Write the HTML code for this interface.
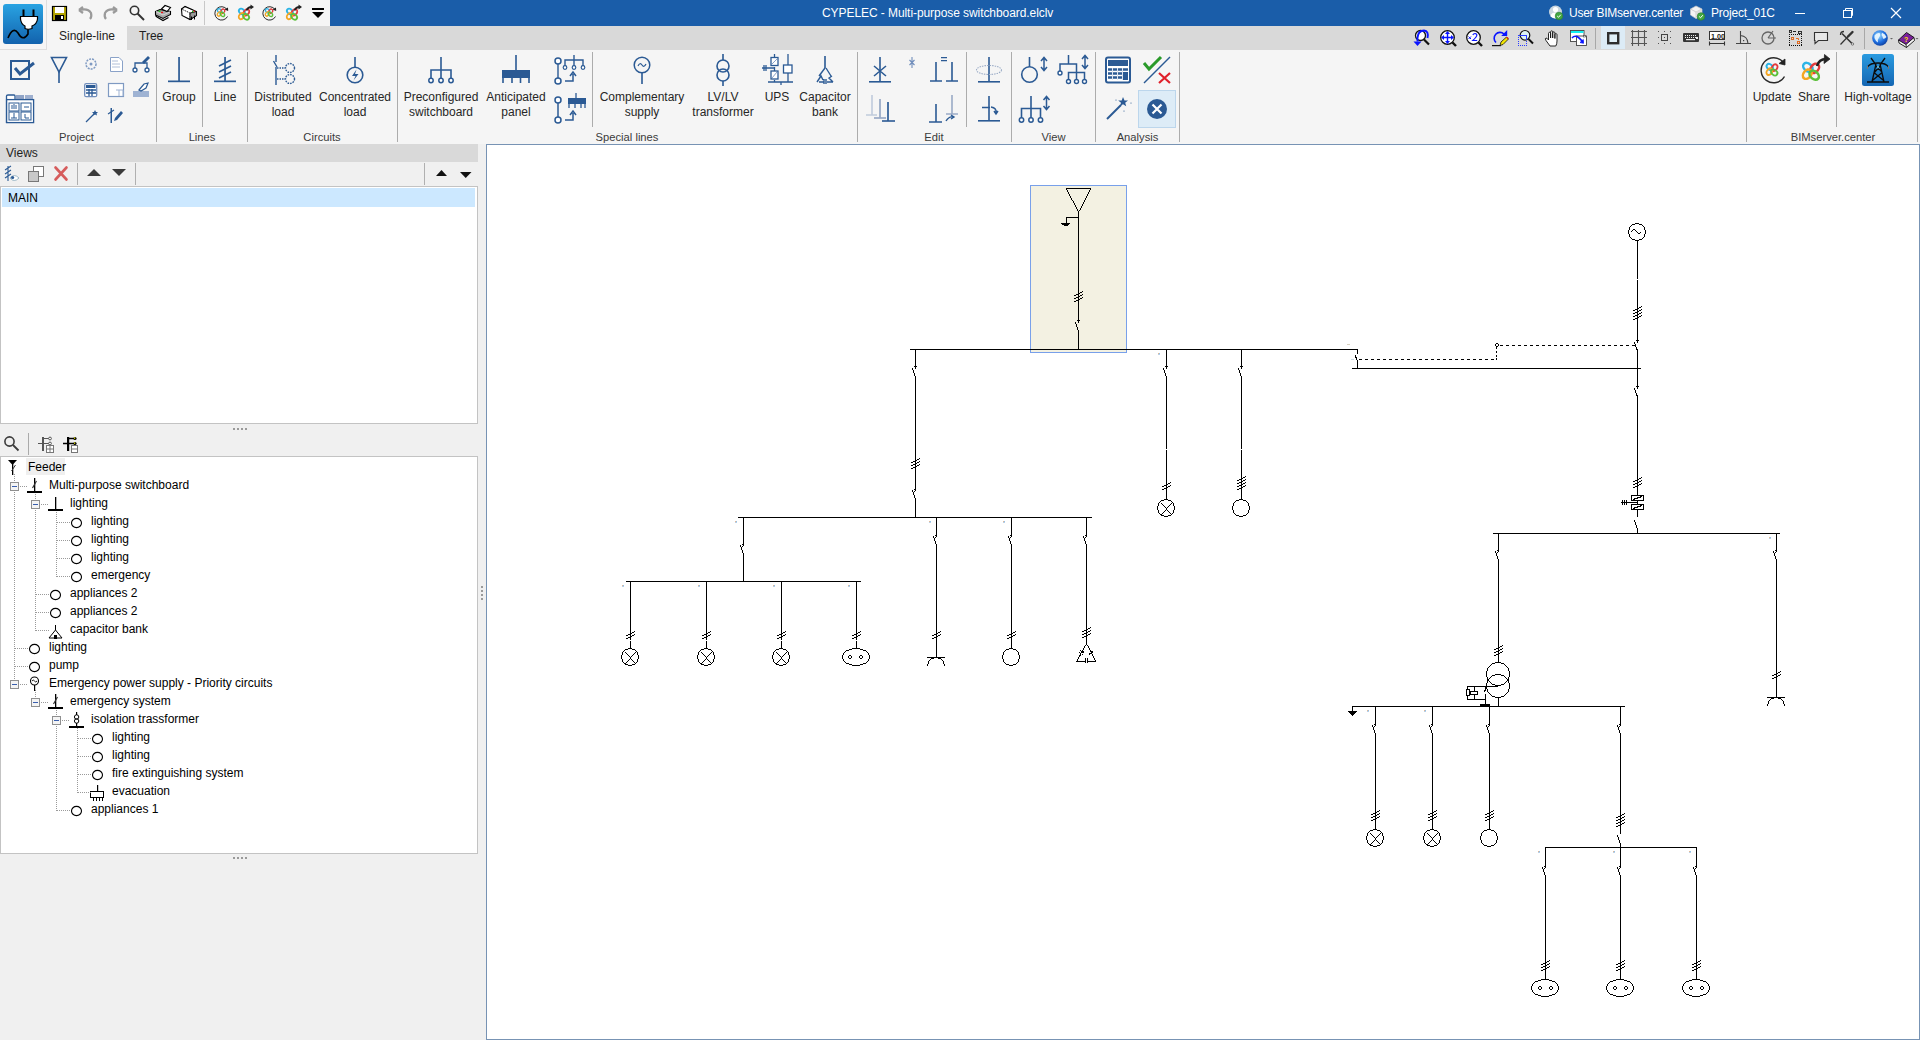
<!DOCTYPE html>
<html><head><meta charset="utf-8">
<style>
*{box-sizing:border-box;margin:0;padding:0}
html,body{width:1920px;height:1040px;overflow:hidden;background:#f0f0f0;font-family:"Liberation Sans",sans-serif;font-size:12px;color:#1e1e1e}
.a{position:absolute}
.t{position:absolute;white-space:nowrap;line-height:14px}
.c{text-align:center}
svg{position:absolute;overflow:visible}
</style></head><body>

<!-- title bar -->
<div class="a" style="left:0;top:0;width:1920px;height:26px;background:#1a5da9"></div>
<div class="a" style="left:0;top:0;width:330px;height:26px;background:#f5f5f5"></div>
<!-- tab strip -->
<div class="a" style="left:0;top:26px;width:1920px;height:24px;background:#d9d9d9"></div>
<div class="a" style="left:0;top:26px;width:127px;height:24px;background:#f5f5f5"></div>
<!-- app icon box -->
<div class="a" style="left:0;top:0;width:47px;height:50px;background:#f5f5f5;border-right:1px solid #dedede;border-bottom:1px solid #dedede"></div>
<!-- ribbon -->
<div class="a" style="left:0;top:50px;width:1920px;height:94px;background:#f5f5f5"></div>

<!-- title text -->
<div class="t" id="title" style="left:822px;top:6px;color:#fff;letter-spacing:-0.07px">CYPELEC - Multi-purpose switchboard.elclv</div>
<div class="t" id="user" style="left:1569px;top:6px;color:#fff;letter-spacing:-0.25px">User BIMserver.center</div>
<div class="t" id="proj" style="left:1711px;top:6px;color:#fff;letter-spacing:-0.2px">Project_01C</div>

<!-- tabs -->
<div class="t" style="left:59px;top:29px">Single-line</div>
<div class="t" style="left:139px;top:29px">Tree</div>

<!-- left panel -->
<div class="a" style="left:0;top:144px;width:478px;height:18px;background:#d9d9d9"></div>
<div class="t" style="left:6px;top:146px">Views</div>
<div class="a" style="left:0;top:186px;width:478px;height:238px;background:#fff;border:1px solid #c3c3c3"></div>
<div class="a" style="left:2px;top:188px;width:473px;height:19px;background:#cce8ff"></div>
<div class="t" style="left:8px;top:191px;color:#000">MAIN</div>
<div class="a" style="left:0;top:456px;width:478px;height:398px;background:#fff;border:1px solid #c3c3c3"></div>

<!-- canvas -->
<div class="a" style="left:486px;top:144px;width:1434px;height:896px;background:#fff;border:1px solid #7793b4"></div>

<div class="t c" style="left:6.5px;top:130px;width:140px;color:#3a3a3a;font-size:11.2px">Project</div><div class="t c" style="left:132px;top:130px;width:140px;color:#3a3a3a;font-size:11.2px">Lines</div><div class="t c" style="left:252px;top:130px;width:140px;color:#3a3a3a;font-size:11.2px">Circuits</div><div class="t c" style="left:557px;top:130px;width:140px;color:#3a3a3a;font-size:11.2px">Special lines</div><div class="t c" style="left:864px;top:130px;width:140px;color:#3a3a3a;font-size:11.2px">Edit</div><div class="t c" style="left:983.5px;top:130px;width:140px;color:#3a3a3a;font-size:11.2px">View</div><div class="t c" style="left:1067.5px;top:130px;width:140px;color:#3a3a3a;font-size:11.2px">Analysis</div><div class="t c" style="left:1763px;top:130px;width:140px;color:#3a3a3a;font-size:11.2px">BIMserver.center</div><div class="t c" style="left:109px;top:90px;width:140px;color:#262626">Group</div><div class="t c" style="left:155px;top:90px;width:140px;color:#262626">Line</div><div class="t c" style="left:213px;top:90px;width:140px;color:#262626">Distributed</div><div class="t c" style="left:213px;top:105px;width:140px;color:#262626">load</div><div class="t c" style="left:285px;top:90px;width:140px;color:#262626">Concentrated</div><div class="t c" style="left:285px;top:105px;width:140px;color:#262626">load</div><div class="t c" style="left:371px;top:90px;width:140px;color:#262626">Preconfigured</div><div class="t c" style="left:371px;top:105px;width:140px;color:#262626">switchboard</div><div class="t c" style="left:446px;top:90px;width:140px;color:#262626">Anticipated</div><div class="t c" style="left:446px;top:105px;width:140px;color:#262626">panel</div><div class="t c" style="left:572px;top:90px;width:140px;color:#262626">Complementary</div><div class="t c" style="left:572px;top:105px;width:140px;color:#262626">supply</div><div class="t c" style="left:653px;top:90px;width:140px;color:#262626">LV/LV</div><div class="t c" style="left:653px;top:105px;width:140px;color:#262626">transformer</div><div class="t c" style="left:707px;top:90px;width:140px;color:#262626">UPS</div><div class="t c" style="left:755px;top:90px;width:140px;color:#262626">Capacitor</div><div class="t c" style="left:755px;top:105px;width:140px;color:#262626">bank</div><div class="t c" style="left:1702px;top:90px;width:140px;color:#262626">Update</div><div class="t c" style="left:1744px;top:90px;width:140px;color:#262626">Share</div><div class="t c" style="left:1808px;top:90px;width:140px;color:#262626">High-voltage</div><svg style="left:0;top:0" width="1920" height="150"><rect x="156" y="52" width="1" height="90" fill="#acacac"/><rect x="247" y="52" width="1" height="90" fill="#acacac"/><rect x="397" y="52" width="1" height="90" fill="#acacac"/><rect x="857" y="52" width="1" height="90" fill="#acacac"/><rect x="1011" y="52" width="1" height="90" fill="#acacac"/><rect x="1095" y="52" width="1" height="90" fill="#acacac"/><rect x="1179" y="52" width="1" height="90" fill="#acacac"/><rect x="1746" y="52" width="1" height="90" fill="#acacac"/><rect x="202" y="52" width="1" height="75" fill="#acacac"/><rect x="592" y="52" width="1" height="75" fill="#acacac"/><rect x="966" y="52" width="1" height="75" fill="#acacac"/><rect x="1836" y="52" width="1" height="75" fill="#acacac"/><rect x="1917" y="52" width="1" height="90" fill="#acacac"/><rect x="11" y="61" width="18" height="18" fill="none" stroke="#2b5a94" stroke-width="2"/><path d="M15 68 L20 74 L34 63" fill="none" stroke="#2b5a94" stroke-width="3"/><path d="M51.5 57.5 H66.5 L59 72 Z" fill="none" stroke="#2b5a94" stroke-width="1.6"/><rect x="58.2" y="71" width="1.6" height="12" fill="#2b5a94"/><path d="M6.5 123 V96 Q6.5 95 8 95 H14 Q15 95 15 96 V99" fill="#fff" stroke="#2b5a94" stroke-width="1.3"/><rect x="16" y="95" width="8" height="4" fill="#8fa3c6"/><rect x="25" y="95" width="8" height="4" fill="#9fb0cf"/><rect x="6.6" y="99.6" width="27" height="23" fill="#fff" stroke="#2b5a94" stroke-width="1.3"/><rect x="9" y="103" width="10" height="8" fill="none" stroke="#2b5a94" stroke-width="1"/><rect x="21" y="103" width="10" height="8" fill="none" stroke="#2b5a94" stroke-width="1"/><rect x="9" y="112" width="10" height="8" fill="none" stroke="#2b5a94" stroke-width="1"/><rect x="21" y="112" width="10" height="8" fill="none" stroke="#2b5a94" stroke-width="1"/><path d="M12 109 V105 M14 109 V104 M16 109 V105 M24 107 H29 M25 114 V118 H29 M11 118 H17 M14 113 V118" stroke="#2b5a94" stroke-width="1" fill="none"/><circle cx="91" cy="64" r="5" fill="none" stroke="#7f9ac2" stroke-width="1.5" stroke-dasharray="2 1"/><circle cx="91" cy="64" r="1.5" fill="#7f9ac2"/><path d="M110.5 57.5 H119 L122.5 61 V71.5 H110.5 Z" fill="#fff" stroke="#8aa2c8" stroke-width="1"/><path d="M112 61 H118 M112 64 H120 M112 67 H120" stroke="#b0bfd8"/><path d="M135 68 V63 H147 V68" fill="none" stroke="#2b5a94" stroke-width="1.3"/><circle cx="135" cy="70" r="2" fill="#fff" stroke="#2b5a94" stroke-width="1.3"/><circle cx="147" cy="70" r="2" fill="#fff" stroke="#2b5a94" stroke-width="1.3"/><path d="M142 62 L148 56 L150 58 L144 64 Z" fill="#2b5a94"/><rect x="84.7" y="83.7" width="12" height="13" rx="1.5" fill="#fff" stroke="#6f8dbb" stroke-width="1.3"/><rect x="86" y="85" width="9.5" height="3" fill="#2b5a94"/><path d="M86 90 H96 M86 93 H96 M89 89 V96 M92 89 V96" stroke="#2b5a94" stroke-width="1.3"/><rect x="108.5" y="83.5" width="15" height="13" fill="#fff" stroke="#7f9ac2" stroke-width="1.2"/><path d="M116 90 H123 V96 M119 90 V96" stroke="#9fb3d3" fill="none"/><rect x="133" y="91" width="16" height="6" fill="#9fb3d3"/><path d="M139 90 L144 84 L148 83 L146 88 L141 91 Z" fill="#fff" stroke="#2b5a94" stroke-width="1.2"/><path d="M86 122 L95 113" stroke="#2b5a94" stroke-width="1.3"/><path d="M95 110 l1 2 l2 0 l-1.5 1.5 l0.5 2 l-2 -1 l-2 1 l0.5 -2 l-1.5 -1.5 l2 0 z" fill="#2b5a94"/><rect x="110.5" y="108" width="1.5" height="15" fill="#2b5a94"/><path d="M108 114 L114 110" stroke="#2b5a94" stroke-width="1.2"/><path d="M115 118 L121 111 L123 113 L117 120 L114 121 Z" fill="#2b5a94"/><rect x="178.2" y="57" width="1.7" height="24" fill="#2b5a94"/><rect x="168" y="80.5" width="22" height="1.7" fill="#2b5a94"/><rect x="224.2" y="57" width="1.7" height="24" fill="#2b5a94"/><rect x="214" y="80.5" width="22" height="1.7" fill="#2b5a94"/><path d="M219 66 L231 60 M219 72 L231 66 M219 78 L231 72" stroke="#2b5a94" stroke-width="1.7"/><path d="M276 55 V62 M273.5 61 L277 67 M276 67 V85" stroke="#2b5a94" stroke-width="1.4" fill="none"/><circle cx="290" cy="68" r="4.5" fill="none" stroke="#2b5a94" stroke-width="1.4" stroke-dasharray="1.6 1"/><circle cx="290" cy="79" r="4.5" fill="none" stroke="#2b5a94" stroke-width="1.4" stroke-dasharray="1.6 1"/><path d="M277 68 H285 M277 79 H285" stroke="#2b5a94" stroke-width="1.4" stroke-dasharray="1.5 1"/><rect x="354.2" y="57" width="1.6" height="11" fill="#2b5a94"/><circle cx="355" cy="75" r="7.8" fill="none" stroke="#2b5a94" stroke-width="1.6"/><path d="M356.5 69.5 L352 76 H355.5 L353.5 80.5 L358.5 74 H355 Z" fill="#2b5a94"/><path d="M441 57 V79 M431 80 V70 H451 V80" fill="none" stroke="#2b5a94" stroke-width="1.6"/><circle cx="431" cy="80.5" r="2.2" fill="#fff" stroke="#2b5a94" stroke-width="1.5"/><circle cx="441" cy="80.5" r="2.2" fill="#fff" stroke="#2b5a94" stroke-width="1.5"/><circle cx="451" cy="80.5" r="2.2" fill="#fff" stroke="#2b5a94" stroke-width="1.5"/><rect x="515.2" y="55" width="1.6" height="16" fill="#2b5a94"/><rect x="502" y="70" width="28" height="8" fill="#2b5a94"/><path d="M503 78 V83 M512 78 V83 M520.5 78 V83 M529 78 V83" stroke="#2b5a94" stroke-width="1.6"/><circle cx="558" cy="61" r="3" fill="#fff" stroke="#2b5a94" stroke-width="1.5"/><circle cx="558" cy="81" r="3" fill="#fff" stroke="#2b5a94" stroke-width="1.5"/><path d="M558 64 V78 M565 67 V60 H583 V67 M574 55 V66" fill="none" stroke="#2b5a94" stroke-width="1.4"/><circle cx="565" cy="67.5" r="1.8" fill="#fff" stroke="#2b5a94" stroke-width="1.2"/><circle cx="574" cy="67.5" r="1.8" fill="#fff" stroke="#2b5a94" stroke-width="1.2"/><circle cx="583" cy="67.5" r="1.8" fill="#fff" stroke="#2b5a94" stroke-width="1.2"/><path d="M565 81 H573 V74 M570 76 L573 72 L576 76" fill="none" stroke="#2b5a94" stroke-width="1.5"/><circle cx="558" cy="100" r="3" fill="#fff" stroke="#2b5a94" stroke-width="1.5"/><circle cx="558" cy="120" r="3" fill="#fff" stroke="#2b5a94" stroke-width="1.5"/><path d="M558 103 V117" stroke="#2b5a94" stroke-width="1.5"/><rect x="568" y="98" width="18" height="6" fill="#2b5a94"/><path d="M576 93 V98 M569 104 V108 M575 104 V108 M581 104 V108 M585 104 V108" stroke="#2b5a94" stroke-width="1.3"/><path d="M565 120 H573 V113 M570 115 L573 111 L576 115" fill="none" stroke="#2b5a94" stroke-width="1.5"/><circle cx="642" cy="65" r="7.8" fill="none" stroke="#2b5a94" stroke-width="1.5"/><path d="M638 66 Q640 62 642 65 T646 64" fill="none" stroke="#2b5a94" stroke-width="1.2"/><rect x="641.2" y="73" width="1.6" height="11" fill="#2b5a94"/><rect x="722.2" y="54" width="1.6" height="6" fill="#2b5a94"/><circle cx="723" cy="66" r="6" fill="none" stroke="#2b5a94" stroke-width="1.6"/><circle cx="723" cy="75" r="6" fill="none" stroke="#2b5a94" stroke-width="1.6"/><rect x="722.2" y="81" width="1.6" height="5" fill="#2b5a94"/><path d="M774.5 54 V58 M774.5 67 V71 M774.5 80 V82 M788 54 V65 M788 73 V82 M768 82 H793 M781 82 V85 M762 68 H774 M764 65 V71 M766 65 V71" fill="none" stroke="#2b5a94" stroke-width="1.3"/><rect x="771" y="57.5" width="7" height="8" fill="#fff" stroke="#2b5a94" stroke-width="1.3"/><rect x="771" y="71" width="7" height="8" fill="#fff" stroke="#2b5a94" stroke-width="1.3"/><rect x="783.5" y="65" width="8.5" height="8" fill="#fff" stroke="#2b5a94" stroke-width="1.3"/><path d="M772 64 L777 59 M772 78 L777 72" stroke="#8aa2c8"/><rect x="824.2" y="56" width="1.6" height="12" fill="#2b5a94"/><path d="M825 68 L819 76 M817 82 L821 76 L823 80 M826 68 L831 76 M833 82 L829 78 L832 76 M819 82 H824 M827 82 H833 M824 79 V84 M826 79 V84" fill="none" stroke="#2b5a94" stroke-width="1.4"/><rect x="879.2" y="57" width="1.6" height="24" fill="#2b5a94"/><rect x="869" y="81" width="22" height="1.6" fill="#2b5a94"/><path d="M874 66 L886 76 M886 66 L874 76" stroke="#2b5a94" stroke-width="1.6"/><path d="M912 57 V68 M909.5 60 L914.5 65 M914.5 60 L909.5 65" stroke="#6f8dbb" stroke-width="1.1"/><path d="M936 62 V81 M930 81 H942 M952 62 V81 M946 81 H958" fill="none" stroke="#2b5a94" stroke-width="1.6"/><path d="M941 57.7 H947 M941 60.7 H947" fill="none" stroke="#2b5a94" stroke-width="1.3"/><path d="M872 95 V115 M866 115 H877 M880 99 V118 M874 118 H886 M888 102 V121 M882 121 H895" fill="none" stroke="#c0cbdc" stroke-width="1.6"/><path d="M880 99 V118 M874 118 H886" fill="none" stroke="#9aabc6" stroke-width="1.6"/><path d="M888 102 V121 M882 121 H895" fill="none" stroke="#2b5a94" stroke-width="1.6"/><path d="M936 104 V122 M929 122 H942" fill="none" stroke="#2b5a94" stroke-width="1.6"/><path d="M952 95 V114 M946 114 H958" fill="none" stroke="#9aabc6" stroke-width="1.6"/><path d="M946 121 Q949 116 953 117 M951 115 L954 117 L951 119" fill="none" stroke="#2b5a94" stroke-width="1.4"/><rect x="988.2" y="57" width="1.6" height="24" fill="#2b5a94"/><rect x="978" y="81" width="22" height="1.6" fill="#2b5a94"/><ellipse cx="989" cy="70" rx="12.5" ry="4.5" fill="none" stroke="#9aabc6" stroke-width="1.1" stroke-dasharray="1.5 1"/><rect x="988.2" y="96" width="1.6" height="25" fill="#2b5a94"/><rect x="978" y="120" width="22" height="1.6" fill="#2b5a94"/><path d="M982 107.5 H990 M991 107 Q997 108 996 113 M994 111 L996 114 L998 111" fill="none" stroke="#2b5a94" stroke-width="1.4"/><path d="M1029.5 57 V67" stroke="#2b5a94" stroke-width="1.6"/><circle cx="1029.5" cy="74.5" r="7.8" fill="none" stroke="#2b5a94" stroke-width="1.6"/><path d="M1044 58 V70 M1041 61 L1044 57.5 L1047 61 M1041 67 L1044 70.5 L1047 67" fill="none" stroke="#2b5a94" stroke-width="1.5"/><path d="M1068.5 55 V64 M1060 72 V64 H1076.5 V72.5 M1068.5 80 V72.5 H1084.5 V80 M1076.5 72.5 V80" fill="none" stroke="#2b5a94" stroke-width="1.5"/><circle cx="1060" cy="73" r="2" fill="#fff" stroke="#2b5a94" stroke-width="1.4"/><circle cx="1068.5" cy="81.5" r="2" fill="#fff" stroke="#2b5a94" stroke-width="1.4"/><circle cx="1076.5" cy="81.5" r="2" fill="#fff" stroke="#2b5a94" stroke-width="1.4"/><circle cx="1084.5" cy="81.5" r="2" fill="#fff" stroke="#2b5a94" stroke-width="1.4"/><path d="M1085 56 V68 M1082 59 L1085 55.5 L1088 59 M1082 65 L1085 68.5 L1088 65" fill="none" stroke="#2b5a94" stroke-width="1.5"/><path d="M1031 96 V119 M1021.5 119 V108.5 H1040.5 V119" fill="none" stroke="#2b5a94" stroke-width="1.6"/><circle cx="1021.5" cy="120" r="2.2" fill="#fff" stroke="#2b5a94" stroke-width="1.5"/><circle cx="1031" cy="120" r="2.2" fill="#fff" stroke="#2b5a94" stroke-width="1.5"/><circle cx="1040.5" cy="120" r="2.2" fill="#fff" stroke="#2b5a94" stroke-width="1.5"/><path d="M1046.5 97 V109 M1043.5 100 L1046.5 96.5 L1049.5 100 M1043.5 106 L1046.5 109.5 L1049.5 106" fill="none" stroke="#2b5a94" stroke-width="1.5"/><rect x="1106" y="57.5" width="24" height="25" rx="2" fill="#fff" stroke="#2b5a94" stroke-width="2"/><rect x="1108" y="60" width="20" height="6" fill="#2b5a94"/><path d="M1108 69.5 H1128 M1108 73.5 H1128 M1108 77.5 H1128" stroke="#2b5a94" stroke-width="2.4"/><path d="M1112.5 68 V80 M1117.5 68 V80 M1122.5 68 V80" stroke="#dde4ee" stroke-width="1"/><rect x="1123" y="72" width="5" height="8" fill="#2b5a94"/><path d="M1144 83 L1170 57" stroke="#2b5a94" stroke-width="1.5"/><path d="M1144 63 L1149 69 L1161 57" fill="none" stroke="#2a9a2a" stroke-width="3"/><path d="M1159 73 L1170 83 M1170 73 L1159 83" stroke="#e0202a" stroke-width="2.2"/><path d="M1107 119 L1121 105" stroke="#2b5a94" stroke-width="2"/><path d="M1123 97 l1.5 3.5 l3.5 0 l-2.8 2.3 l1 3.5 l-3.2 -2 l-3 2 l1 -3.5 l-2.8 -2.3 l3.5 0 z" fill="#2b5a94"/><circle cx="1116" cy="100" r="0.6" fill="#2b5a94"/><circle cx="1131" cy="103" r="0.6" fill="#2b5a94"/><circle cx="1124" cy="111" r="0.6" fill="#2b5a94"/><rect x="1138.5" y="90.5" width="37" height="37" fill="#ddecf7" stroke="#bcd6ec" stroke-width="1"/><circle cx="1157" cy="109" r="10" fill="#2b5a94"/><path d="M1152.5 104.5 L1161.5 113.5 M1161.5 104.5 L1152.5 113.5" stroke="#fff" stroke-width="2.2"/><path d="M1783 62 A12.5 12.5 0 1 0 1784.5 76.5" fill="none" stroke="#2a2a2a" stroke-width="1.4"/><path d="M1779 63.5 L1785 59 L1785 65 Z" fill="#222" stroke="#222" stroke-width="0.8"/><g transform="translate(1772,69.5) scale(0.72)" fill="none" stroke-width="2.6"><ellipse cx="-3" cy="-3.5" rx="5" ry="3.6" transform="rotate(40 -3 -3.5)" stroke="#2bb4e6"/><ellipse cx="3.5" cy="-2.5" rx="5" ry="3.6" transform="rotate(-50 3.5 -2.5)" stroke="#e23c3c"/><ellipse cx="-3.5" cy="3" rx="5" ry="3.6" transform="rotate(-50 -3.5 3)" stroke="#f4a623"/><ellipse cx="3" cy="4" rx="5" ry="3.6" transform="rotate(40 3 4)" stroke="#5bbf3a"/></g><g transform="translate(1811,71) scale(1.05)" fill="none" stroke-width="2.4"><ellipse cx="-3" cy="-3.5" rx="5" ry="3.6" transform="rotate(40 -3 -3.5)" stroke="#2bb4e6"/><ellipse cx="3.5" cy="-2.5" rx="5" ry="3.6" transform="rotate(-50 3.5 -2.5)" stroke="#e23c3c"/><ellipse cx="-3.5" cy="3" rx="5" ry="3.6" transform="rotate(-50 -3.5 3)" stroke="#f4a623"/><ellipse cx="3" cy="4" rx="5" ry="3.6" transform="rotate(40 3 4)" stroke="#5bbf3a"/></g><path d="M1817 66 Q1819 59 1826 59" fill="none" stroke="#222" stroke-width="2.6"/><path d="M1824.5 54.5 L1830 59 L1824 63.5 Z" fill="#222" stroke="#222" stroke-width="0.8"/><defs><linearGradient id="hvg" x1="0" y1="0" x2="0" y2="1"><stop offset="0" stop-color="#2a9be0"/><stop offset="1" stop-color="#1466b3"/></linearGradient></defs><rect x="1862" y="54" width="32" height="32" rx="2.5" fill="url(#hvg)"/><path d="M1871 58 L1876 65 M1885 58 L1880 65 M1867.5 67 Q1870 63 1878 63 Q1886 63 1888.5 67 M1876 64 L1872 82 M1880 64 L1884 82 M1876 66 L1882 72 M1880 66 L1874 73 M1874.5 73 L1883 80 M1881.5 73 L1873 80 M1867 82 H1889" fill="none" stroke="#0c0c0c" stroke-width="1.3"/><rect x="1867" y="66" width="1" height="3" fill="#777"/><rect x="1888" y="66" width="1" height="3" fill="#777"/><rect x="1877" y="66" width="2" height="2" fill="#6ab"/></svg>
<svg style="left:0;top:0" width="1920" height="1040"><rect x="3" y="4" width="40" height="40" rx="3" fill="url(#apg2)"/><defs><linearGradient id="apg2" x1="0" y1="0" x2="0" y2="1"><stop offset="0" stop-color="#29a3e2"/><stop offset="1" stop-color="#1262ad"/></linearGradient></defs><path d="M8 38 Q13 26 18 33 Q23 42 28 34 V29" fill="none" stroke="#000" stroke-width="1.6"/><path d="M23.5 9.5 V16 M33.5 9.5 V16" stroke="#000" stroke-width="2"/><path d="M20.5 16.5 H37.5 V19 Q37 24 32 26 V28.5 Q28 30 25 28.5 V26 Q21 24 20.5 19 Z" fill="#fff" stroke="#000" stroke-width="1.2"/><rect x="52.5" y="6.5" width="14" height="14" fill="#b3a400" stroke="#000" stroke-width="1.2"/><rect x="55" y="7" width="9" height="6" fill="#fff"/><rect x="55" y="15" width="9" height="5" fill="#000"/><rect x="61" y="16" width="2" height="3" fill="#fff"/><path d="M80 10 Q88 8 91 13 Q92 17 90 19 M79 10 L83 7 M79 10 L83 13" fill="none" stroke="#9a9a9a" stroke-width="2.2"/><path d="M116 10 Q108 8 105 13 Q104 17 106 19 M117 10 L113 7 M117 10 L113 13" fill="none" stroke="#9a9a9a" stroke-width="2.2"/><circle cx="134.5" cy="10.5" r="4.2" fill="none" stroke="#333" stroke-width="1.6"/><path d="M137.5 13.5 L144 20" stroke="#333" stroke-width="2"/><path d="M155.5 11.5 L160 9.5 L170.5 11.5 V14.5 L163 18.5 L155.5 15 Z" fill="#a8a8a8" stroke="#000" stroke-width="1.1"/><path d="M156 11.5 L163 15 L170 11.8" fill="none" stroke="#d8d8d8" stroke-width="1"/><path d="M155.5 15.5 L157 17 L163 20.5 L168.5 17.5" fill="none" stroke="#000" stroke-width="1.2"/><path d="M161.5 9 L165 5.5 L170.5 7.5 L167 11.5 Z" fill="#fff" stroke="#000" stroke-width="1.1"/><rect x="158.5" y="10.6" width="2" height="1.3" fill="#1c1"/><rect x="161" y="11.8" width="2" height="1.3" fill="#e11"/><path d="M181.5 9 L185 6.5 L196.5 11.5 V15.5 L190 19.5 L182 15.5 Z" fill="#fff" stroke="#000" stroke-width="1.1"/><path d="M181.5 9 L190 13 V19.5 M185 6.5 L193 10" fill="none" stroke="#000" stroke-width="0.9" stroke-dasharray="1.2 0.8"/><path d="M190 13 L196.5 11.5 V15.5 L190 19.5 Z" fill="#999" stroke="#000" stroke-width="0.9"/><path d="M191.5 16.5 V20 M194.5 15.5 V19.5" stroke="#000" stroke-width="1"/><rect x="192" y="11" width="1.4" height="1.2" fill="#1c1"/><rect x="193.6" y="10.6" width="1.4" height="1.2" fill="#e11"/><rect x="204" y="1" width="1" height="24" fill="#c8c8c8"/><path d="M227 9.5 A6.7 6.7 0 1 0 227.5 16.5" fill="none" stroke="#2a2a2a" stroke-width="1"/><path d="M224.5 9.5 L228 7.5 L228.2 11 Z" fill="#222"/><g transform="translate(221,12.5) scale(0.48)" fill="none" stroke-width="2.8"><ellipse cx="-3" cy="-3.5" rx="5" ry="3.6" transform="rotate(40 -3 -3.5)" stroke="#2bb4e6"/><ellipse cx="3.5" cy="-2.5" rx="5" ry="3.6" transform="rotate(-50 3.5 -2.5)" stroke="#e23c3c"/><ellipse cx="-3.5" cy="3" rx="5" ry="3.6" transform="rotate(-50 -3.5 3)" stroke="#f4a623"/><ellipse cx="3" cy="4" rx="5" ry="3.6" transform="rotate(40 3 4)" stroke="#5bbf3a"/></g><g transform="translate(244,14) scale(0.68)" fill="none" stroke-width="2.6"><ellipse cx="-3" cy="-3.5" rx="5" ry="3.6" transform="rotate(40 -3 -3.5)" stroke="#2bb4e6"/><ellipse cx="3.5" cy="-2.5" rx="5" ry="3.6" transform="rotate(-50 3.5 -2.5)" stroke="#e23c3c"/><ellipse cx="-3.5" cy="3" rx="5" ry="3.6" transform="rotate(-50 -3.5 3)" stroke="#f4a623"/><ellipse cx="3" cy="4" rx="5" ry="3.6" transform="rotate(40 3 4)" stroke="#5bbf3a"/></g><path d="M246.5 10.5 Q248 7 251.5 7" fill="none" stroke="#222" stroke-width="1.8"/><path d="M250.5 4.5 L254 7 L250.5 9.5 Z" fill="#222"/><path d="M275 9.5 A6.7 6.7 0 1 0 275.5 16.5" fill="none" stroke="#2a2a2a" stroke-width="1"/><path d="M272.5 9.5 L276 7.5 L276.2 11 Z" fill="#222"/><g transform="translate(269,12.5) scale(0.48)" fill="none" stroke-width="2.8"><ellipse cx="-3" cy="-3.5" rx="5" ry="3.6" transform="rotate(40 -3 -3.5)" stroke="#2bb4e6"/><ellipse cx="3.5" cy="-2.5" rx="5" ry="3.6" transform="rotate(-50 3.5 -2.5)" stroke="#e23c3c"/><ellipse cx="-3.5" cy="3" rx="5" ry="3.6" transform="rotate(-50 -3.5 3)" stroke="#f4a623"/><ellipse cx="3" cy="4" rx="5" ry="3.6" transform="rotate(40 3 4)" stroke="#5bbf3a"/></g><g transform="translate(292,14) scale(0.68)" fill="none" stroke-width="2.6"><ellipse cx="-3" cy="-3.5" rx="5" ry="3.6" transform="rotate(40 -3 -3.5)" stroke="#2bb4e6"/><ellipse cx="3.5" cy="-2.5" rx="5" ry="3.6" transform="rotate(-50 3.5 -2.5)" stroke="#e23c3c"/><ellipse cx="-3.5" cy="3" rx="5" ry="3.6" transform="rotate(-50 -3.5 3)" stroke="#f4a623"/><ellipse cx="3" cy="4" rx="5" ry="3.6" transform="rotate(40 3 4)" stroke="#5bbf3a"/></g><path d="M294.5 10.5 Q296 7 299.5 7" fill="none" stroke="#222" stroke-width="1.8"/><path d="M298.5 4.5 L302 7 L298.5 9.5 Z" fill="#222"/><rect x="312" y="8" width="12" height="2" fill="#000"/><path d="M312 12 H324 L318 18 Z" fill="#000"/><circle cx="1555.5" cy="12" r="6.5" fill="#c9d6e0"/><circle cx="1555.5" cy="9.5" r="2.6" fill="#fff"/><path d="M1550.5 16.5 Q1551 12.5 1555.5 12.5 Q1560 12.5 1560.5 16.5 Q1558 18.5 1555.5 18.5 Q1553 18.5 1550.5 16.5 Z" fill="#fff"/><circle cx="1559" cy="16" r="3.8" fill="#43a843" stroke="#2c7a2c" stroke-width="0.6"/><path d="M1557.2 16 l1.3 1.3 l2.3 -2.6" stroke="#fff" stroke-width="1" fill="none"/><path d="M1690.5 9 L1696 6 L1702 9 V15 L1696 18.5 L1690.5 15 Z" fill="#f4f4f4" stroke="#c8c8c8" stroke-width="0.7"/><path d="M1690.5 9 L1696 12 L1702 9 M1696 12 V18.5" fill="none" stroke="#c0c0c0" stroke-width="0.7"/><path d="M1696 12 L1702 9 V15 L1696 18.5 Z" fill="#dcdcdc"/><circle cx="1701" cy="16.5" r="3.8" fill="#43a843" stroke="#2c7a2c" stroke-width="0.6"/><path d="M1699.2 16.5 l1.3 1.3 l2.3 -2.6" stroke="#fff" stroke-width="1" fill="none"/><rect x="1795" y="13" width="10" height="1" fill="#fff"/><rect x="1843.5" y="10.5" width="8" height="7" fill="none" stroke="#fff" stroke-width="1"/><path d="M1845.5 10.5 V8.5 H1852.5 V15.5 H1851.5" fill="none" stroke="#fff" stroke-width="1"/><path d="M1891 8 L1901 18 M1901 8 L1891 18" stroke="#fff" stroke-width="1.2"/><circle cx="1420.5" cy="35.5" r="5" fill="#fff" stroke="#111" stroke-width="1.3"/><path d="M1424 39.5 L1429 44.5" stroke="#111" stroke-width="2.2"/><path d="M1427.5 38 Q1429 31 1424 30.5 Q1418 30.5 1417.5 38 V41.5" fill="none" stroke="#0a14ff" stroke-width="1.9"/><path d="M1413.5 41.5 H1421.5 L1417.5 46 Z" fill="#0a14ff"/><circle cx="1447.5" cy="37.5" r="6.8" fill="#fff" stroke="#111" stroke-width="1.3"/><path d="M1452.5 42.5 L1456 46" stroke="#111" stroke-width="2.4"/><path d="M1447.5 33 V42 M1443 37.5 H1452" stroke="#0a14ff" stroke-width="1.4"/><path d="M1445 34 L1447.5 31 L1450 34 Z M1445 41 L1447.5 44 L1450 41 Z M1444 35 L1441 37.5 L1444 40 Z M1451 35 L1454 37.5 L1451 40 Z" fill="#0a14ff"/><circle cx="1473.5" cy="37.5" r="6.8" fill="#fff" stroke="#111" stroke-width="1.3"/><path d="M1478.5 42.5 L1482 46" stroke="#111" stroke-width="2.4"/><path d="M1468.5 36.5 L1471 39 M1471 36.5 L1468.5 39" stroke="#0a14ff" stroke-width="1"/><path d="M1472.8 35 Q1473.5 33.5 1475 33.5 Q1477 33.6 1476.8 35.5 Q1476.5 37 1472.8 40.5 H1477.2" fill="none" stroke="#0a14ff" stroke-width="1.2"/><path d="M1496 42.5 A5.5 5.5 0 1 1 1504 34" fill="none" stroke="#0a14ff" stroke-width="1.6"/><path d="M1507.2 30 V36 H1501.2 Z" fill="#0a14ff"/><rect x="1492" y="45" width="9" height="1.2" fill="#111"/><path d="M1500 45.5 L1501 42 L1506.5 37 L1508.5 39 L1503 44.5 Z" fill="#f2e600" stroke="#111" stroke-width="0.8"/><path d="M1506 37.5 L1508 39.5 L1508.5 38 L1507.5 37 Z" fill="#e02020"/><circle cx="1525" cy="35.3" r="4.8" fill="#def4f4" fill-opacity="0.9" stroke="#111" stroke-width="1.2"/><path d="M1528.5 39 L1533 43.5" stroke="#111" stroke-width="2"/><rect x="1518" y="35" width="9" height="1" fill="#2a3cff"/><rect x="1526" y="35" width="1" height="5" fill="#2a3cff"/><rect x="1518" y="37" width="1" height="1" fill="#2a3cff"/><rect x="1518" y="39" width="1" height="1" fill="#2a3cff"/><rect x="1518" y="41" width="1" height="1" fill="#2a3cff"/><rect x="1518" y="43" width="1" height="1" fill="#2a3cff"/><rect x="1518" y="45" width="1" height="1" fill="#2a3cff"/><rect x="1520" y="45" width="1" height="1" fill="#2a3cff"/><rect x="1522" y="45" width="1" height="1" fill="#2a3cff"/><rect x="1524" y="45" width="1" height="1" fill="#2a3cff"/><rect x="1526" y="45" width="1" height="1" fill="#2a3cff"/><rect x="1526" y="41" width="1" height="1" fill="#2a3cff"/><rect x="1526" y="43" width="1" height="1" fill="#2a3cff"/><path d="M1550 46 L1546 40.5 Q1544.5 38.5 1546 38 Q1547 37.8 1548.5 40 V33.5 Q1548.6 32.3 1549.6 32.3 Q1550.5 32.4 1550.6 33.5 V38 V31.8 Q1550.7 30.8 1551.7 30.8 Q1552.7 30.9 1552.7 31.9 V38 V32.8 Q1552.8 31.8 1553.8 31.8 Q1554.8 31.9 1554.9 32.9 V38.5 V34.5 Q1555 33.6 1556 33.6 Q1556.9 33.7 1557 34.6 V41 Q1557 44 1555.8 46 Z" fill="#fff" stroke="#111" stroke-width="0.9" stroke-linejoin="round"/><rect x="1570.5" y="30.5" width="13.5" height="11" fill="#fff" stroke="#444" stroke-width="0.9"/><rect x="1571" y="31" width="12.5" height="2" fill="#10f0f0"/><rect x="1576.5" y="36" width="10" height="9.5" fill="#fff" stroke="#444" stroke-width="0.9"/><rect x="1583.3" y="35.5" width="2" height="1.5" fill="#fff" stroke="#444" stroke-width="0.6"/><path d="M1572 38 Q1574 35.5 1577 36.5 Q1579 37.5 1582.5 41.5" fill="none" stroke="#0a14ff" stroke-width="1.5"/><path d="M1580 42.5 L1583.5 43.3 L1583.3 39.5 Z" fill="#0a14ff" stroke="#0a14ff" stroke-width="0.8"/><rect x="1595" y="28" width="1" height="21" fill="#a8a8a8"/><rect x="1601" y="26" width="24" height="23" fill="#dcebf6"/><rect x="1608.2" y="33.2" width="10" height="10" fill="#e0f0f8" stroke="#2e2e2e" stroke-width="2.4"/><path d="M1632.5 30 V46 M1638.5 30 V46 M1644.5 30 V46 M1631 31.5 H1647 M1631 37.5 H1647 M1631 43.5 H1647" stroke="#555" stroke-width="1.1"/><rect x="1661.5" y="34.5" width="6" height="6" fill="none" stroke="#444" stroke-width="1"/><rect x="1664" y="37" width="1" height="1" fill="#444"/><rect x="1658" y="31" width="1" height="1" fill="#555"/><rect x="1658" y="37" width="1" height="1" fill="#555"/><rect x="1658" y="43" width="1" height="1" fill="#555"/><rect x="1664" y="31" width="1" height="1" fill="#555"/><rect x="1664" y="43" width="1" height="1" fill="#555"/><rect x="1670" y="31" width="1" height="1" fill="#555"/><rect x="1670" y="37" width="1" height="1" fill="#555"/><rect x="1670" y="43" width="1" height="1" fill="#555"/><rect x="1683" y="33" width="16" height="9" rx="1" fill="#333"/><rect x="1685" y="35" width="1" height="1" fill="#eee"/><rect x="1685" y="37" width="1" height="1" fill="#eee"/><rect x="1687" y="35" width="1" height="1" fill="#eee"/><rect x="1687" y="37" width="1" height="1" fill="#eee"/><rect x="1689" y="35" width="1" height="1" fill="#eee"/><rect x="1689" y="37" width="1" height="1" fill="#eee"/><rect x="1691" y="35" width="1" height="1" fill="#eee"/><rect x="1691" y="37" width="1" height="1" fill="#eee"/><rect x="1693" y="35" width="1" height="1" fill="#eee"/><rect x="1693" y="37" width="1" height="1" fill="#eee"/><rect x="1695" y="35" width="1" height="1" fill="#eee"/><rect x="1695" y="37" width="1" height="1" fill="#eee"/><rect x="1686" y="39" width="9" height="1.2" fill="#eee"/><rect x="1696" y="37" width="2" height="2" fill="#eee"/><rect x="1709.5" y="31.5" width="15" height="8" fill="#fff" stroke="#333" stroke-width="1"/><text x="1711" y="38.6" font-size="7.2" fill="#222" font-family="Liberation Sans" font-weight="bold">1.00</text><path d="M1709.5 43.5 H1724.5 M1709.5 41.5 V45.5 M1724.5 41.5 V45.5" stroke="#333" stroke-width="1.1"/><path d="M1740.5 31 V43.5 M1736 43.5 H1751 M1740.5 35.5 Q1747.5 36 1748 43.5" fill="none" stroke="#444" stroke-width="1.1"/><rect x="1743" y="40" width="1.2" height="1.2" fill="#444"/><circle cx="1768" cy="38" r="6" fill="none" stroke="#666" stroke-width="1.3"/><path d="M1768 38 H1776 M1768 38 L1773 31" stroke="#666" stroke-width="1.2"/><rect x="1789" y="34" width="1" height="1" fill="#111"/><rect x="1789" y="45" width="1" height="1" fill="#111"/><rect x="1791" y="34" width="1" height="1" fill="#111"/><rect x="1791" y="45" width="1" height="1" fill="#111"/><rect x="1793" y="34" width="1" height="1" fill="#111"/><rect x="1793" y="45" width="1" height="1" fill="#111"/><rect x="1795" y="34" width="1" height="1" fill="#111"/><rect x="1795" y="45" width="1" height="1" fill="#111"/><rect x="1797" y="34" width="1" height="1" fill="#111"/><rect x="1797" y="45" width="1" height="1" fill="#111"/><rect x="1799" y="34" width="1" height="1" fill="#111"/><rect x="1799" y="45" width="1" height="1" fill="#111"/><rect x="1801" y="34" width="1" height="1" fill="#111"/><rect x="1801" y="45" width="1" height="1" fill="#111"/><rect x="1789" y="36" width="1" height="1" fill="#111"/><rect x="1789" y="38" width="1" height="1" fill="#111"/><rect x="1789" y="40" width="1" height="1" fill="#111"/><rect x="1789" y="42" width="1" height="1" fill="#111"/><rect x="1789" y="44" width="1" height="1" fill="#111"/><rect x="1801" y="36" width="1" height="1" fill="#111"/><rect x="1801" y="38" width="1" height="1" fill="#111"/><rect x="1801" y="40" width="1" height="1" fill="#111"/><rect x="1801" y="42" width="1" height="1" fill="#111"/><rect x="1801" y="44" width="1" height="1" fill="#111"/><rect x="1789.5" y="30.5" width="2" height="2" fill="none" stroke="#222" stroke-width="0.9"/><rect x="1793" y="31" width="3" height="1" fill="#222"/><rect x="1798.5" y="31.5" width="3" height="2" fill="none" stroke="#222" stroke-width="0.9"/><rect x="1791.5" y="37.5" width="2" height="2" fill="none" stroke="#e06a20" stroke-width="1"/><path d="M1796 38.5 H1798.5 V40" fill="none" stroke="#e06a20" stroke-width="1"/><rect x="1797.5" y="41.5" width="2" height="2" fill="none" stroke="#e06a20" stroke-width="1"/><path d="M1814.5 32.5 H1827.5 V40.5 H1818.5 L1815 43.5 V40.5 H1814.5 Z" fill="#e8e8e8" stroke="#333" stroke-width="1.1"/><path d="M1840.5 44.5 L1849 35.5" stroke="#333" stroke-width="1.2"/><path d="M1848 36.5 L1852.5 32" stroke="#333" stroke-width="2.4" stroke-linecap="round"/><path d="M1842 33.5 L1852 43.5" stroke="#333" stroke-width="1.6"/><path d="M1844 31.5 Q1840.5 31.5 1840.5 35" fill="none" stroke="#333" stroke-width="1.3"/><circle cx="1852.5" cy="44" r="1.2" fill="#ddd" stroke="#555" stroke-width="0.7"/><rect x="1864" y="28" width="1" height="21" fill="#a8a8a8"/><defs><radialGradient id="glb" cx="0.4" cy="0.35" r="0.7"><stop offset="0" stop-color="#9fe0ff"/><stop offset="0.6" stop-color="#1f6fe0"/><stop offset="1" stop-color="#0b3b9a"/></radialGradient></defs><circle cx="1880" cy="38" r="7.8" fill="url(#glb)"/><path d="M1874.5 35.5 Q1876.5 32.5 1879.5 33 Q1881 35 1879 37.5 Q1877.5 39 1878 42.5 Q1875.5 41 1874.5 38 Z M1882 32.8 Q1885.5 34 1886.5 37 Q1884.5 39.5 1883 38.5 Q1882.5 36 1881.5 35 Z" fill="#e8f6ff" opacity="0.95"/><path d="M1890 38 h3 l-1.5 1.5 z" fill="#666"/><path d="M1898.5 40 L1899 43 L1906.5 47.5 L1914.5 40.5 L1914 37.5 Z" fill="#f4f4f4" stroke="#111" stroke-width="0.9"/><path d="M1898.5 40 L1906 44.5 L1914 37.5 L1906.5 32.5 Z" fill="#7a1f9a" stroke="#111" stroke-width="0.9"/><path d="M1906 44.5 L1906.5 47.5" stroke="#111" stroke-width="0.8"/><text x="1904" y="41.5" font-size="7" fill="#ffe000" font-family="Liberation Sans" font-weight="bold">?</text><path d="M1915.5 38 h3 l-1.5 1.5 z" fill="#666"/><path d="M5 170 L11 166 M5 174 L11 170 M5 178 L11 174 M8 166 V181" stroke="#2b5a94" stroke-width="1.1"/><path d="M10 178 Q14 173 19 178 Q14 183 10 178 Z" fill="#fff" stroke="#8ab" stroke-width="0.8"/><circle cx="12.6" cy="177.5" r="1.6" fill="#2b5a94"/><rect x="33.5" y="166.5" width="10" height="10" fill="#fff" stroke="#777" stroke-width="1"/><rect x="28.5" y="171.5" width="10" height="10" fill="#c8c8c8" stroke="#777" stroke-width="1"/><path d="M55.5 167.5 L66.5 179.5 M66.5 167.5 L55.5 179.5" stroke="#d65c5c" stroke-width="2.6" stroke-linecap="round"/><rect x="77" y="163" width="1" height="22" fill="#b0b0b0"/><path d="M87 176 L94 169 L101 176 Z" fill="#3a3a3a"/><path d="M112 169 H126 L119 176 Z" fill="#3a3a3a"/><rect x="135" y="163" width="1" height="22" fill="#b0b0b0"/><rect x="424" y="163" width="1" height="22" fill="#b0b0b0"/><path d="M436 176 L441.5 170 L447 176 Z" fill="#111"/><path d="M460 172 H471.5 L465.7 178 Z" fill="#111"/><circle cx="9.5" cy="441.5" r="4.6" fill="none" stroke="#3c3c3c" stroke-width="1.6"/><path d="M13 445 L18.5 450.5" stroke="#3c3c3c" stroke-width="1.8"/><rect x="28" y="433" width="1" height="22" fill="#aaa"/><rect x="42" y="437" width="2" height="14" fill="#555"/><path d="M38 443.5 H50 M44 438.5 H50" stroke="#555" stroke-width="1.2"/><circle cx="50" cy="438.5" r="1.4" fill="#fff" stroke="#555" stroke-width="1"/><circle cx="50" cy="443.5" r="1.4" fill="#fff" stroke="#555" stroke-width="1"/><rect x="46" y="445" width="8" height="8" fill="#777"/><rect x="47" y="446" width="2.5" height="2.5" fill="#fff"/><rect x="50.5" y="446" width="2.5" height="2.5" fill="#fff"/><rect x="47" y="449.5" width="2.5" height="2.5" fill="#fff"/><rect x="50.5" y="449.5" width="2.5" height="2.5" fill="#fff"/><rect x="67" y="437" width="2.2" height="14" fill="#000"/><path d="M63 443.5 H75 M69 438.5 H75" stroke="#000" stroke-width="1.4"/><circle cx="75" cy="438.5" r="1.6" fill="#000"/><circle cx="75" cy="443.5" r="1.6" fill="#000"/><rect x="74" y="437.5" width="1.2" height="1.2" fill="#ff0"/><rect x="74" y="442.5" width="1.2" height="1.2" fill="#ff0"/><rect x="71" y="445" width="7" height="8" fill="#777"/><rect x="72" y="446" width="5" height="2.5" fill="#fff"/><rect x="72" y="449.5" width="5" height="2.5" fill="#fff"/><rect x="233" y="428" width="2" height="2" fill="#9a9a9a"/><rect x="237" y="428" width="2" height="2" fill="#9a9a9a"/><rect x="241" y="428" width="2" height="2" fill="#9a9a9a"/><rect x="245" y="428" width="2" height="2" fill="#9a9a9a"/><rect x="233" y="857" width="2" height="2" fill="#9a9a9a"/><rect x="237" y="857" width="2" height="2" fill="#9a9a9a"/><rect x="241" y="857" width="2" height="2" fill="#9a9a9a"/><rect x="245" y="857" width="2" height="2" fill="#9a9a9a"/><rect x="481" y="586" width="2" height="2" fill="#9a9a9a"/><rect x="481" y="590" width="2" height="2" fill="#9a9a9a"/><rect x="481" y="594" width="2" height="2" fill="#9a9a9a"/><rect x="481" y="598" width="2" height="2" fill="#9a9a9a"/></svg>
<div class="a" style="left:26px;top:458px;width:39px;height:17px;background:#efefef"></div><div class="t" style="left:28px;top:460px;color:#000">Feeder</div><div class="t" style="left:49px;top:478px;color:#000">Multi-purpose switchboard</div><div class="t" style="left:70px;top:496px;color:#000">lighting</div><div class="t" style="left:91px;top:514px;color:#000">lighting</div><div class="t" style="left:91px;top:532px;color:#000">lighting</div><div class="t" style="left:91px;top:550px;color:#000">lighting</div><div class="t" style="left:91px;top:568px;color:#000">emergency</div><div class="t" style="left:70px;top:586px;color:#000">appliances 2</div><div class="t" style="left:70px;top:604px;color:#000">appliances 2</div><div class="t" style="left:70px;top:622px;color:#000">capacitor bank</div><div class="t" style="left:49px;top:640px;color:#000">lighting</div><div class="t" style="left:49px;top:658px;color:#000">pump</div><div class="t" style="left:49px;top:676px;color:#000">Emergency power supply - Priority circuits</div><div class="t" style="left:70px;top:694px;color:#000">emergency system</div><div class="t" style="left:91px;top:712px;color:#000">isolation trassformer</div><div class="t" style="left:112px;top:730px;color:#000">lighting</div><div class="t" style="left:112px;top:748px;color:#000">lighting</div><div class="t" style="left:112px;top:766px;color:#000">fire extinguishing system</div><div class="t" style="left:112px;top:784px;color:#000">evacuation</div><div class="t" style="left:91px;top:802px;color:#000">appliances 1</div><svg style="left:0;top:0" width="480" height="1040"><rect x="77" y="726" width="1" height="1" fill="#9a9a9a"/><rect x="77" y="728" width="1" height="1" fill="#9a9a9a"/><rect x="77" y="730" width="1" height="1" fill="#9a9a9a"/><rect x="77" y="732" width="1" height="1" fill="#9a9a9a"/><rect x="77" y="734" width="1" height="1" fill="#9a9a9a"/><rect x="77" y="736" width="1" height="1" fill="#9a9a9a"/><rect x="77" y="738" width="1" height="1" fill="#9a9a9a"/><rect x="77" y="740" width="1" height="1" fill="#9a9a9a"/><rect x="77" y="742" width="1" height="1" fill="#9a9a9a"/><rect x="77" y="744" width="1" height="1" fill="#9a9a9a"/><rect x="77" y="746" width="1" height="1" fill="#9a9a9a"/><rect x="77" y="748" width="1" height="1" fill="#9a9a9a"/><rect x="77" y="750" width="1" height="1" fill="#9a9a9a"/><rect x="77" y="752" width="1" height="1" fill="#9a9a9a"/><rect x="77" y="754" width="1" height="1" fill="#9a9a9a"/><rect x="77" y="756" width="1" height="1" fill="#9a9a9a"/><rect x="77" y="758" width="1" height="1" fill="#9a9a9a"/><rect x="77" y="760" width="1" height="1" fill="#9a9a9a"/><rect x="77" y="762" width="1" height="1" fill="#9a9a9a"/><rect x="77" y="764" width="1" height="1" fill="#9a9a9a"/><rect x="77" y="766" width="1" height="1" fill="#9a9a9a"/><rect x="77" y="768" width="1" height="1" fill="#9a9a9a"/><rect x="77" y="770" width="1" height="1" fill="#9a9a9a"/><rect x="77" y="772" width="1" height="1" fill="#9a9a9a"/><rect x="77" y="774" width="1" height="1" fill="#9a9a9a"/><rect x="77" y="776" width="1" height="1" fill="#9a9a9a"/><rect x="77" y="778" width="1" height="1" fill="#9a9a9a"/><rect x="77" y="780" width="1" height="1" fill="#9a9a9a"/><rect x="77" y="782" width="1" height="1" fill="#9a9a9a"/><rect x="77" y="784" width="1" height="1" fill="#9a9a9a"/><rect x="77" y="786" width="1" height="1" fill="#9a9a9a"/><rect x="77" y="788" width="1" height="1" fill="#9a9a9a"/><rect x="77" y="790" width="1" height="1" fill="#9a9a9a"/><rect x="77" y="792" width="1" height="1" fill="#9a9a9a"/><rect x="56" y="708" width="1" height="1" fill="#9a9a9a"/><rect x="56" y="710" width="1" height="1" fill="#9a9a9a"/><rect x="56" y="712" width="1" height="1" fill="#9a9a9a"/><rect x="56" y="714" width="1" height="1" fill="#9a9a9a"/><rect x="56" y="716" width="1" height="1" fill="#9a9a9a"/><rect x="56" y="718" width="1" height="1" fill="#9a9a9a"/><rect x="56" y="720" width="1" height="1" fill="#9a9a9a"/><rect x="56" y="722" width="1" height="1" fill="#9a9a9a"/><rect x="56" y="724" width="1" height="1" fill="#9a9a9a"/><rect x="56" y="726" width="1" height="1" fill="#9a9a9a"/><rect x="56" y="728" width="1" height="1" fill="#9a9a9a"/><rect x="56" y="730" width="1" height="1" fill="#9a9a9a"/><rect x="56" y="732" width="1" height="1" fill="#9a9a9a"/><rect x="56" y="734" width="1" height="1" fill="#9a9a9a"/><rect x="56" y="736" width="1" height="1" fill="#9a9a9a"/><rect x="56" y="738" width="1" height="1" fill="#9a9a9a"/><rect x="56" y="740" width="1" height="1" fill="#9a9a9a"/><rect x="56" y="742" width="1" height="1" fill="#9a9a9a"/><rect x="56" y="744" width="1" height="1" fill="#9a9a9a"/><rect x="56" y="746" width="1" height="1" fill="#9a9a9a"/><rect x="56" y="748" width="1" height="1" fill="#9a9a9a"/><rect x="56" y="750" width="1" height="1" fill="#9a9a9a"/><rect x="56" y="752" width="1" height="1" fill="#9a9a9a"/><rect x="56" y="754" width="1" height="1" fill="#9a9a9a"/><rect x="56" y="756" width="1" height="1" fill="#9a9a9a"/><rect x="56" y="758" width="1" height="1" fill="#9a9a9a"/><rect x="56" y="760" width="1" height="1" fill="#9a9a9a"/><rect x="56" y="762" width="1" height="1" fill="#9a9a9a"/><rect x="56" y="764" width="1" height="1" fill="#9a9a9a"/><rect x="56" y="766" width="1" height="1" fill="#9a9a9a"/><rect x="56" y="768" width="1" height="1" fill="#9a9a9a"/><rect x="56" y="770" width="1" height="1" fill="#9a9a9a"/><rect x="56" y="772" width="1" height="1" fill="#9a9a9a"/><rect x="56" y="774" width="1" height="1" fill="#9a9a9a"/><rect x="56" y="776" width="1" height="1" fill="#9a9a9a"/><rect x="56" y="778" width="1" height="1" fill="#9a9a9a"/><rect x="56" y="780" width="1" height="1" fill="#9a9a9a"/><rect x="56" y="782" width="1" height="1" fill="#9a9a9a"/><rect x="56" y="784" width="1" height="1" fill="#9a9a9a"/><rect x="56" y="786" width="1" height="1" fill="#9a9a9a"/><rect x="56" y="788" width="1" height="1" fill="#9a9a9a"/><rect x="56" y="790" width="1" height="1" fill="#9a9a9a"/><rect x="56" y="792" width="1" height="1" fill="#9a9a9a"/><rect x="56" y="794" width="1" height="1" fill="#9a9a9a"/><rect x="56" y="796" width="1" height="1" fill="#9a9a9a"/><rect x="56" y="798" width="1" height="1" fill="#9a9a9a"/><rect x="56" y="800" width="1" height="1" fill="#9a9a9a"/><rect x="56" y="802" width="1" height="1" fill="#9a9a9a"/><rect x="56" y="804" width="1" height="1" fill="#9a9a9a"/><rect x="56" y="806" width="1" height="1" fill="#9a9a9a"/><rect x="56" y="808" width="1" height="1" fill="#9a9a9a"/><rect x="56" y="810" width="1" height="1" fill="#9a9a9a"/><rect x="35" y="690" width="1" height="1" fill="#9a9a9a"/><rect x="35" y="692" width="1" height="1" fill="#9a9a9a"/><rect x="35" y="694" width="1" height="1" fill="#9a9a9a"/><rect x="35" y="696" width="1" height="1" fill="#9a9a9a"/><rect x="35" y="698" width="1" height="1" fill="#9a9a9a"/><rect x="35" y="700" width="1" height="1" fill="#9a9a9a"/><rect x="35" y="702" width="1" height="1" fill="#9a9a9a"/><rect x="56" y="510" width="1" height="1" fill="#9a9a9a"/><rect x="56" y="512" width="1" height="1" fill="#9a9a9a"/><rect x="56" y="514" width="1" height="1" fill="#9a9a9a"/><rect x="56" y="516" width="1" height="1" fill="#9a9a9a"/><rect x="56" y="518" width="1" height="1" fill="#9a9a9a"/><rect x="56" y="520" width="1" height="1" fill="#9a9a9a"/><rect x="56" y="522" width="1" height="1" fill="#9a9a9a"/><rect x="56" y="524" width="1" height="1" fill="#9a9a9a"/><rect x="56" y="526" width="1" height="1" fill="#9a9a9a"/><rect x="56" y="528" width="1" height="1" fill="#9a9a9a"/><rect x="56" y="530" width="1" height="1" fill="#9a9a9a"/><rect x="56" y="532" width="1" height="1" fill="#9a9a9a"/><rect x="56" y="534" width="1" height="1" fill="#9a9a9a"/><rect x="56" y="536" width="1" height="1" fill="#9a9a9a"/><rect x="56" y="538" width="1" height="1" fill="#9a9a9a"/><rect x="56" y="540" width="1" height="1" fill="#9a9a9a"/><rect x="56" y="542" width="1" height="1" fill="#9a9a9a"/><rect x="56" y="544" width="1" height="1" fill="#9a9a9a"/><rect x="56" y="546" width="1" height="1" fill="#9a9a9a"/><rect x="56" y="548" width="1" height="1" fill="#9a9a9a"/><rect x="56" y="550" width="1" height="1" fill="#9a9a9a"/><rect x="56" y="552" width="1" height="1" fill="#9a9a9a"/><rect x="56" y="554" width="1" height="1" fill="#9a9a9a"/><rect x="56" y="556" width="1" height="1" fill="#9a9a9a"/><rect x="56" y="558" width="1" height="1" fill="#9a9a9a"/><rect x="56" y="560" width="1" height="1" fill="#9a9a9a"/><rect x="56" y="562" width="1" height="1" fill="#9a9a9a"/><rect x="56" y="564" width="1" height="1" fill="#9a9a9a"/><rect x="56" y="566" width="1" height="1" fill="#9a9a9a"/><rect x="56" y="568" width="1" height="1" fill="#9a9a9a"/><rect x="56" y="570" width="1" height="1" fill="#9a9a9a"/><rect x="56" y="572" width="1" height="1" fill="#9a9a9a"/><rect x="56" y="574" width="1" height="1" fill="#9a9a9a"/><rect x="56" y="576" width="1" height="1" fill="#9a9a9a"/><rect x="35" y="492" width="1" height="1" fill="#9a9a9a"/><rect x="35" y="494" width="1" height="1" fill="#9a9a9a"/><rect x="35" y="496" width="1" height="1" fill="#9a9a9a"/><rect x="35" y="498" width="1" height="1" fill="#9a9a9a"/><rect x="35" y="500" width="1" height="1" fill="#9a9a9a"/><rect x="35" y="502" width="1" height="1" fill="#9a9a9a"/><rect x="35" y="504" width="1" height="1" fill="#9a9a9a"/><rect x="35" y="506" width="1" height="1" fill="#9a9a9a"/><rect x="35" y="508" width="1" height="1" fill="#9a9a9a"/><rect x="35" y="510" width="1" height="1" fill="#9a9a9a"/><rect x="35" y="512" width="1" height="1" fill="#9a9a9a"/><rect x="35" y="514" width="1" height="1" fill="#9a9a9a"/><rect x="35" y="516" width="1" height="1" fill="#9a9a9a"/><rect x="35" y="518" width="1" height="1" fill="#9a9a9a"/><rect x="35" y="520" width="1" height="1" fill="#9a9a9a"/><rect x="35" y="522" width="1" height="1" fill="#9a9a9a"/><rect x="35" y="524" width="1" height="1" fill="#9a9a9a"/><rect x="35" y="526" width="1" height="1" fill="#9a9a9a"/><rect x="35" y="528" width="1" height="1" fill="#9a9a9a"/><rect x="35" y="530" width="1" height="1" fill="#9a9a9a"/><rect x="35" y="532" width="1" height="1" fill="#9a9a9a"/><rect x="35" y="534" width="1" height="1" fill="#9a9a9a"/><rect x="35" y="536" width="1" height="1" fill="#9a9a9a"/><rect x="35" y="538" width="1" height="1" fill="#9a9a9a"/><rect x="35" y="540" width="1" height="1" fill="#9a9a9a"/><rect x="35" y="542" width="1" height="1" fill="#9a9a9a"/><rect x="35" y="544" width="1" height="1" fill="#9a9a9a"/><rect x="35" y="546" width="1" height="1" fill="#9a9a9a"/><rect x="35" y="548" width="1" height="1" fill="#9a9a9a"/><rect x="35" y="550" width="1" height="1" fill="#9a9a9a"/><rect x="35" y="552" width="1" height="1" fill="#9a9a9a"/><rect x="35" y="554" width="1" height="1" fill="#9a9a9a"/><rect x="35" y="556" width="1" height="1" fill="#9a9a9a"/><rect x="35" y="558" width="1" height="1" fill="#9a9a9a"/><rect x="35" y="560" width="1" height="1" fill="#9a9a9a"/><rect x="35" y="562" width="1" height="1" fill="#9a9a9a"/><rect x="35" y="564" width="1" height="1" fill="#9a9a9a"/><rect x="35" y="566" width="1" height="1" fill="#9a9a9a"/><rect x="35" y="568" width="1" height="1" fill="#9a9a9a"/><rect x="35" y="570" width="1" height="1" fill="#9a9a9a"/><rect x="35" y="572" width="1" height="1" fill="#9a9a9a"/><rect x="35" y="574" width="1" height="1" fill="#9a9a9a"/><rect x="35" y="576" width="1" height="1" fill="#9a9a9a"/><rect x="35" y="578" width="1" height="1" fill="#9a9a9a"/><rect x="35" y="580" width="1" height="1" fill="#9a9a9a"/><rect x="35" y="582" width="1" height="1" fill="#9a9a9a"/><rect x="35" y="584" width="1" height="1" fill="#9a9a9a"/><rect x="35" y="586" width="1" height="1" fill="#9a9a9a"/><rect x="35" y="588" width="1" height="1" fill="#9a9a9a"/><rect x="35" y="590" width="1" height="1" fill="#9a9a9a"/><rect x="35" y="592" width="1" height="1" fill="#9a9a9a"/><rect x="35" y="594" width="1" height="1" fill="#9a9a9a"/><rect x="35" y="596" width="1" height="1" fill="#9a9a9a"/><rect x="35" y="598" width="1" height="1" fill="#9a9a9a"/><rect x="35" y="600" width="1" height="1" fill="#9a9a9a"/><rect x="35" y="602" width="1" height="1" fill="#9a9a9a"/><rect x="35" y="604" width="1" height="1" fill="#9a9a9a"/><rect x="35" y="606" width="1" height="1" fill="#9a9a9a"/><rect x="35" y="608" width="1" height="1" fill="#9a9a9a"/><rect x="35" y="610" width="1" height="1" fill="#9a9a9a"/><rect x="35" y="612" width="1" height="1" fill="#9a9a9a"/><rect x="35" y="614" width="1" height="1" fill="#9a9a9a"/><rect x="35" y="616" width="1" height="1" fill="#9a9a9a"/><rect x="35" y="618" width="1" height="1" fill="#9a9a9a"/><rect x="35" y="620" width="1" height="1" fill="#9a9a9a"/><rect x="35" y="622" width="1" height="1" fill="#9a9a9a"/><rect x="35" y="624" width="1" height="1" fill="#9a9a9a"/><rect x="35" y="626" width="1" height="1" fill="#9a9a9a"/><rect x="35" y="628" width="1" height="1" fill="#9a9a9a"/><rect x="35" y="630" width="1" height="1" fill="#9a9a9a"/><rect x="14" y="474" width="1" height="1" fill="#9a9a9a"/><rect x="14" y="476" width="1" height="1" fill="#9a9a9a"/><rect x="14" y="478" width="1" height="1" fill="#9a9a9a"/><rect x="14" y="480" width="1" height="1" fill="#9a9a9a"/><rect x="14" y="482" width="1" height="1" fill="#9a9a9a"/><rect x="14" y="484" width="1" height="1" fill="#9a9a9a"/><rect x="14" y="486" width="1" height="1" fill="#9a9a9a"/><rect x="14" y="488" width="1" height="1" fill="#9a9a9a"/><rect x="14" y="490" width="1" height="1" fill="#9a9a9a"/><rect x="14" y="492" width="1" height="1" fill="#9a9a9a"/><rect x="14" y="494" width="1" height="1" fill="#9a9a9a"/><rect x="14" y="496" width="1" height="1" fill="#9a9a9a"/><rect x="14" y="498" width="1" height="1" fill="#9a9a9a"/><rect x="14" y="500" width="1" height="1" fill="#9a9a9a"/><rect x="14" y="502" width="1" height="1" fill="#9a9a9a"/><rect x="14" y="504" width="1" height="1" fill="#9a9a9a"/><rect x="14" y="506" width="1" height="1" fill="#9a9a9a"/><rect x="14" y="508" width="1" height="1" fill="#9a9a9a"/><rect x="14" y="510" width="1" height="1" fill="#9a9a9a"/><rect x="14" y="512" width="1" height="1" fill="#9a9a9a"/><rect x="14" y="514" width="1" height="1" fill="#9a9a9a"/><rect x="14" y="516" width="1" height="1" fill="#9a9a9a"/><rect x="14" y="518" width="1" height="1" fill="#9a9a9a"/><rect x="14" y="520" width="1" height="1" fill="#9a9a9a"/><rect x="14" y="522" width="1" height="1" fill="#9a9a9a"/><rect x="14" y="524" width="1" height="1" fill="#9a9a9a"/><rect x="14" y="526" width="1" height="1" fill="#9a9a9a"/><rect x="14" y="528" width="1" height="1" fill="#9a9a9a"/><rect x="14" y="530" width="1" height="1" fill="#9a9a9a"/><rect x="14" y="532" width="1" height="1" fill="#9a9a9a"/><rect x="14" y="534" width="1" height="1" fill="#9a9a9a"/><rect x="14" y="536" width="1" height="1" fill="#9a9a9a"/><rect x="14" y="538" width="1" height="1" fill="#9a9a9a"/><rect x="14" y="540" width="1" height="1" fill="#9a9a9a"/><rect x="14" y="542" width="1" height="1" fill="#9a9a9a"/><rect x="14" y="544" width="1" height="1" fill="#9a9a9a"/><rect x="14" y="546" width="1" height="1" fill="#9a9a9a"/><rect x="14" y="548" width="1" height="1" fill="#9a9a9a"/><rect x="14" y="550" width="1" height="1" fill="#9a9a9a"/><rect x="14" y="552" width="1" height="1" fill="#9a9a9a"/><rect x="14" y="554" width="1" height="1" fill="#9a9a9a"/><rect x="14" y="556" width="1" height="1" fill="#9a9a9a"/><rect x="14" y="558" width="1" height="1" fill="#9a9a9a"/><rect x="14" y="560" width="1" height="1" fill="#9a9a9a"/><rect x="14" y="562" width="1" height="1" fill="#9a9a9a"/><rect x="14" y="564" width="1" height="1" fill="#9a9a9a"/><rect x="14" y="566" width="1" height="1" fill="#9a9a9a"/><rect x="14" y="568" width="1" height="1" fill="#9a9a9a"/><rect x="14" y="570" width="1" height="1" fill="#9a9a9a"/><rect x="14" y="572" width="1" height="1" fill="#9a9a9a"/><rect x="14" y="574" width="1" height="1" fill="#9a9a9a"/><rect x="14" y="576" width="1" height="1" fill="#9a9a9a"/><rect x="14" y="578" width="1" height="1" fill="#9a9a9a"/><rect x="14" y="580" width="1" height="1" fill="#9a9a9a"/><rect x="14" y="582" width="1" height="1" fill="#9a9a9a"/><rect x="14" y="584" width="1" height="1" fill="#9a9a9a"/><rect x="14" y="586" width="1" height="1" fill="#9a9a9a"/><rect x="14" y="588" width="1" height="1" fill="#9a9a9a"/><rect x="14" y="590" width="1" height="1" fill="#9a9a9a"/><rect x="14" y="592" width="1" height="1" fill="#9a9a9a"/><rect x="14" y="594" width="1" height="1" fill="#9a9a9a"/><rect x="14" y="596" width="1" height="1" fill="#9a9a9a"/><rect x="14" y="598" width="1" height="1" fill="#9a9a9a"/><rect x="14" y="600" width="1" height="1" fill="#9a9a9a"/><rect x="14" y="602" width="1" height="1" fill="#9a9a9a"/><rect x="14" y="604" width="1" height="1" fill="#9a9a9a"/><rect x="14" y="606" width="1" height="1" fill="#9a9a9a"/><rect x="14" y="608" width="1" height="1" fill="#9a9a9a"/><rect x="14" y="610" width="1" height="1" fill="#9a9a9a"/><rect x="14" y="612" width="1" height="1" fill="#9a9a9a"/><rect x="14" y="614" width="1" height="1" fill="#9a9a9a"/><rect x="14" y="616" width="1" height="1" fill="#9a9a9a"/><rect x="14" y="618" width="1" height="1" fill="#9a9a9a"/><rect x="14" y="620" width="1" height="1" fill="#9a9a9a"/><rect x="14" y="622" width="1" height="1" fill="#9a9a9a"/><rect x="14" y="624" width="1" height="1" fill="#9a9a9a"/><rect x="14" y="626" width="1" height="1" fill="#9a9a9a"/><rect x="14" y="628" width="1" height="1" fill="#9a9a9a"/><rect x="14" y="630" width="1" height="1" fill="#9a9a9a"/><rect x="14" y="632" width="1" height="1" fill="#9a9a9a"/><rect x="14" y="634" width="1" height="1" fill="#9a9a9a"/><rect x="14" y="636" width="1" height="1" fill="#9a9a9a"/><rect x="14" y="638" width="1" height="1" fill="#9a9a9a"/><rect x="14" y="640" width="1" height="1" fill="#9a9a9a"/><rect x="14" y="642" width="1" height="1" fill="#9a9a9a"/><rect x="14" y="644" width="1" height="1" fill="#9a9a9a"/><rect x="14" y="646" width="1" height="1" fill="#9a9a9a"/><rect x="14" y="648" width="1" height="1" fill="#9a9a9a"/><rect x="14" y="650" width="1" height="1" fill="#9a9a9a"/><rect x="14" y="652" width="1" height="1" fill="#9a9a9a"/><rect x="14" y="654" width="1" height="1" fill="#9a9a9a"/><rect x="14" y="656" width="1" height="1" fill="#9a9a9a"/><rect x="14" y="658" width="1" height="1" fill="#9a9a9a"/><rect x="14" y="660" width="1" height="1" fill="#9a9a9a"/><rect x="14" y="662" width="1" height="1" fill="#9a9a9a"/><rect x="14" y="664" width="1" height="1" fill="#9a9a9a"/><rect x="14" y="666" width="1" height="1" fill="#9a9a9a"/><rect x="14" y="668" width="1" height="1" fill="#9a9a9a"/><rect x="14" y="670" width="1" height="1" fill="#9a9a9a"/><rect x="14" y="672" width="1" height="1" fill="#9a9a9a"/><rect x="14" y="674" width="1" height="1" fill="#9a9a9a"/><rect x="14" y="676" width="1" height="1" fill="#9a9a9a"/><rect x="14" y="678" width="1" height="1" fill="#9a9a9a"/><rect x="14" y="680" width="1" height="1" fill="#9a9a9a"/><rect x="14" y="682" width="1" height="1" fill="#9a9a9a"/><rect x="14" y="684" width="1" height="1" fill="#9a9a9a"/><path d="M8 460 L17 460 L12.5 465 Z" fill="#000"/><rect x="12" y="463" width="1.3" height="12" fill="#000"/><line x1="11.5" y1="471" x2="15.5" y2="465" stroke="#333" stroke-width="1"/><rect x="34" y="478" width="1.3" height="13" fill="#000"/><rect x="27" y="491" width="15" height="2" fill="#000"/><line x1="32.5" y1="488" x2="36.5" y2="481" stroke="#333" stroke-width="1.2"/><rect x="10.5" y="482.5" width="8" height="8" fill="#f4f4f4" stroke="#8f8f8f" stroke-width="1"/><rect x="12" y="486" width="5" height="1" fill="#3a5fae"/><rect x="20" y="486" width="1" height="1" fill="#9a9a9a"/><rect x="22" y="486" width="1" height="1" fill="#9a9a9a"/><rect x="24" y="486" width="1" height="1" fill="#9a9a9a"/><rect x="26" y="486" width="1" height="1" fill="#9a9a9a"/><rect x="55" y="497" width="1.3" height="12" fill="#000"/><rect x="48" y="509" width="15" height="2" fill="#000"/><rect x="31.5" y="500.5" width="8" height="8" fill="#f4f4f4" stroke="#8f8f8f" stroke-width="1"/><rect x="33" y="504" width="5" height="1" fill="#3a5fae"/><rect x="41" y="504" width="1" height="1" fill="#9a9a9a"/><rect x="43" y="504" width="1" height="1" fill="#9a9a9a"/><rect x="45" y="504" width="1" height="1" fill="#9a9a9a"/><rect x="47" y="504" width="1" height="1" fill="#9a9a9a"/><ellipse cx="76.5" cy="523" rx="5" ry="4.6" fill="none" stroke="#000" stroke-width="1.1"/><rect x="57" y="522" width="1" height="1" fill="#9a9a9a"/><rect x="59" y="522" width="1" height="1" fill="#9a9a9a"/><rect x="61" y="522" width="1" height="1" fill="#9a9a9a"/><rect x="63" y="522" width="1" height="1" fill="#9a9a9a"/><rect x="65" y="522" width="1" height="1" fill="#9a9a9a"/><rect x="67" y="522" width="1" height="1" fill="#9a9a9a"/><rect x="69" y="522" width="1" height="1" fill="#9a9a9a"/><ellipse cx="76.5" cy="541" rx="5" ry="4.6" fill="none" stroke="#000" stroke-width="1.1"/><rect x="57" y="540" width="1" height="1" fill="#9a9a9a"/><rect x="59" y="540" width="1" height="1" fill="#9a9a9a"/><rect x="61" y="540" width="1" height="1" fill="#9a9a9a"/><rect x="63" y="540" width="1" height="1" fill="#9a9a9a"/><rect x="65" y="540" width="1" height="1" fill="#9a9a9a"/><rect x="67" y="540" width="1" height="1" fill="#9a9a9a"/><rect x="69" y="540" width="1" height="1" fill="#9a9a9a"/><ellipse cx="76.5" cy="559" rx="5" ry="4.6" fill="none" stroke="#000" stroke-width="1.1"/><rect x="57" y="558" width="1" height="1" fill="#9a9a9a"/><rect x="59" y="558" width="1" height="1" fill="#9a9a9a"/><rect x="61" y="558" width="1" height="1" fill="#9a9a9a"/><rect x="63" y="558" width="1" height="1" fill="#9a9a9a"/><rect x="65" y="558" width="1" height="1" fill="#9a9a9a"/><rect x="67" y="558" width="1" height="1" fill="#9a9a9a"/><rect x="69" y="558" width="1" height="1" fill="#9a9a9a"/><ellipse cx="76.5" cy="577" rx="5" ry="4.6" fill="none" stroke="#000" stroke-width="1.1"/><rect x="57" y="576" width="1" height="1" fill="#9a9a9a"/><rect x="59" y="576" width="1" height="1" fill="#9a9a9a"/><rect x="61" y="576" width="1" height="1" fill="#9a9a9a"/><rect x="63" y="576" width="1" height="1" fill="#9a9a9a"/><rect x="65" y="576" width="1" height="1" fill="#9a9a9a"/><rect x="67" y="576" width="1" height="1" fill="#9a9a9a"/><rect x="69" y="576" width="1" height="1" fill="#9a9a9a"/><ellipse cx="55.5" cy="595" rx="5" ry="4.6" fill="none" stroke="#000" stroke-width="1.1"/><rect x="36" y="594" width="1" height="1" fill="#9a9a9a"/><rect x="38" y="594" width="1" height="1" fill="#9a9a9a"/><rect x="40" y="594" width="1" height="1" fill="#9a9a9a"/><rect x="42" y="594" width="1" height="1" fill="#9a9a9a"/><rect x="44" y="594" width="1" height="1" fill="#9a9a9a"/><rect x="46" y="594" width="1" height="1" fill="#9a9a9a"/><rect x="48" y="594" width="1" height="1" fill="#9a9a9a"/><ellipse cx="55.5" cy="613" rx="5" ry="4.6" fill="none" stroke="#000" stroke-width="1.1"/><rect x="36" y="612" width="1" height="1" fill="#9a9a9a"/><rect x="38" y="612" width="1" height="1" fill="#9a9a9a"/><rect x="40" y="612" width="1" height="1" fill="#9a9a9a"/><rect x="42" y="612" width="1" height="1" fill="#9a9a9a"/><rect x="44" y="612" width="1" height="1" fill="#9a9a9a"/><rect x="46" y="612" width="1" height="1" fill="#9a9a9a"/><rect x="48" y="612" width="1" height="1" fill="#9a9a9a"/><path d="M55.5 625 V630 L49 638 H62 L55.5 630" fill="none" stroke="#000" stroke-width="1"/><rect x="54" y="635" width="3" height="4" fill="#000"/><rect x="36" y="630" width="1" height="1" fill="#9a9a9a"/><rect x="38" y="630" width="1" height="1" fill="#9a9a9a"/><rect x="40" y="630" width="1" height="1" fill="#9a9a9a"/><rect x="42" y="630" width="1" height="1" fill="#9a9a9a"/><rect x="44" y="630" width="1" height="1" fill="#9a9a9a"/><rect x="46" y="630" width="1" height="1" fill="#9a9a9a"/><rect x="48" y="630" width="1" height="1" fill="#9a9a9a"/><ellipse cx="34.5" cy="649" rx="5" ry="4.6" fill="none" stroke="#000" stroke-width="1.1"/><rect x="15" y="648" width="1" height="1" fill="#9a9a9a"/><rect x="17" y="648" width="1" height="1" fill="#9a9a9a"/><rect x="19" y="648" width="1" height="1" fill="#9a9a9a"/><rect x="21" y="648" width="1" height="1" fill="#9a9a9a"/><rect x="23" y="648" width="1" height="1" fill="#9a9a9a"/><rect x="25" y="648" width="1" height="1" fill="#9a9a9a"/><rect x="27" y="648" width="1" height="1" fill="#9a9a9a"/><ellipse cx="34.5" cy="667" rx="5" ry="4.6" fill="none" stroke="#000" stroke-width="1.1"/><rect x="15" y="666" width="1" height="1" fill="#9a9a9a"/><rect x="17" y="666" width="1" height="1" fill="#9a9a9a"/><rect x="19" y="666" width="1" height="1" fill="#9a9a9a"/><rect x="21" y="666" width="1" height="1" fill="#9a9a9a"/><rect x="23" y="666" width="1" height="1" fill="#9a9a9a"/><rect x="25" y="666" width="1" height="1" fill="#9a9a9a"/><rect x="27" y="666" width="1" height="1" fill="#9a9a9a"/><circle cx="34.5" cy="681" r="4" fill="none" stroke="#000" stroke-width="1.1"/><path d="M32 681 q1.2 -2 2.5 0 t2.5 0" fill="none" stroke="#000" stroke-width="0.9"/><rect x="34" y="685" width="1.2" height="6" fill="#000"/><rect x="10.5" y="680.5" width="8" height="8" fill="#f4f4f4" stroke="#8f8f8f" stroke-width="1"/><rect x="12" y="684" width="5" height="1" fill="#3a5fae"/><rect x="20" y="684" width="1" height="1" fill="#9a9a9a"/><rect x="22" y="684" width="1" height="1" fill="#9a9a9a"/><rect x="24" y="684" width="1" height="1" fill="#9a9a9a"/><rect x="26" y="684" width="1" height="1" fill="#9a9a9a"/><rect x="55" y="694" width="1.3" height="13" fill="#000"/><rect x="48" y="707" width="15" height="2" fill="#000"/><line x1="53.5" y1="704" x2="57.5" y2="697" stroke="#333" stroke-width="1.2"/><rect x="31.5" y="698.5" width="8" height="8" fill="#f4f4f4" stroke="#8f8f8f" stroke-width="1"/><rect x="33" y="702" width="5" height="1" fill="#3a5fae"/><rect x="41" y="702" width="1" height="1" fill="#9a9a9a"/><rect x="43" y="702" width="1" height="1" fill="#9a9a9a"/><rect x="45" y="702" width="1" height="1" fill="#9a9a9a"/><rect x="47" y="702" width="1" height="1" fill="#9a9a9a"/><rect x="76" y="712" width="1.2" height="3" fill="#000"/><circle cx="76.6" cy="717" r="2.2" fill="none" stroke="#000" stroke-width="1"/><circle cx="76.6" cy="721" r="2.2" fill="none" stroke="#000" stroke-width="1"/><rect x="76" y="723" width="1.2" height="3" fill="#000"/><rect x="69" y="726" width="15" height="2" fill="#000"/><rect x="52.5" y="716.5" width="8" height="8" fill="#f4f4f4" stroke="#8f8f8f" stroke-width="1"/><rect x="54" y="720" width="5" height="1" fill="#3a5fae"/><rect x="62" y="720" width="1" height="1" fill="#9a9a9a"/><rect x="64" y="720" width="1" height="1" fill="#9a9a9a"/><rect x="66" y="720" width="1" height="1" fill="#9a9a9a"/><rect x="68" y="720" width="1" height="1" fill="#9a9a9a"/><ellipse cx="97.5" cy="739" rx="5" ry="4.6" fill="none" stroke="#000" stroke-width="1.1"/><rect x="78" y="738" width="1" height="1" fill="#9a9a9a"/><rect x="80" y="738" width="1" height="1" fill="#9a9a9a"/><rect x="82" y="738" width="1" height="1" fill="#9a9a9a"/><rect x="84" y="738" width="1" height="1" fill="#9a9a9a"/><rect x="86" y="738" width="1" height="1" fill="#9a9a9a"/><rect x="88" y="738" width="1" height="1" fill="#9a9a9a"/><rect x="90" y="738" width="1" height="1" fill="#9a9a9a"/><ellipse cx="97.5" cy="757" rx="5" ry="4.6" fill="none" stroke="#000" stroke-width="1.1"/><rect x="78" y="756" width="1" height="1" fill="#9a9a9a"/><rect x="80" y="756" width="1" height="1" fill="#9a9a9a"/><rect x="82" y="756" width="1" height="1" fill="#9a9a9a"/><rect x="84" y="756" width="1" height="1" fill="#9a9a9a"/><rect x="86" y="756" width="1" height="1" fill="#9a9a9a"/><rect x="88" y="756" width="1" height="1" fill="#9a9a9a"/><rect x="90" y="756" width="1" height="1" fill="#9a9a9a"/><ellipse cx="97.5" cy="775" rx="5" ry="4.6" fill="none" stroke="#000" stroke-width="1.1"/><rect x="78" y="774" width="1" height="1" fill="#9a9a9a"/><rect x="80" y="774" width="1" height="1" fill="#9a9a9a"/><rect x="82" y="774" width="1" height="1" fill="#9a9a9a"/><rect x="84" y="774" width="1" height="1" fill="#9a9a9a"/><rect x="86" y="774" width="1" height="1" fill="#9a9a9a"/><rect x="88" y="774" width="1" height="1" fill="#9a9a9a"/><rect x="90" y="774" width="1" height="1" fill="#9a9a9a"/><rect x="97" y="785" width="1.2" height="6" fill="#000"/><rect x="90.5" y="791.5" width="13" height="6" fill="none" stroke="#000" stroke-width="1"/><rect x="93" y="798" width="1" height="3" fill="#000"/><rect x="96" y="798" width="1" height="3" fill="#000"/><rect x="99" y="798" width="1" height="3" fill="#000"/><rect x="102" y="798" width="1" height="3" fill="#000"/><rect x="78" y="792" width="1" height="1" fill="#9a9a9a"/><rect x="80" y="792" width="1" height="1" fill="#9a9a9a"/><rect x="82" y="792" width="1" height="1" fill="#9a9a9a"/><rect x="84" y="792" width="1" height="1" fill="#9a9a9a"/><rect x="86" y="792" width="1" height="1" fill="#9a9a9a"/><rect x="88" y="792" width="1" height="1" fill="#9a9a9a"/><rect x="90" y="792" width="1" height="1" fill="#9a9a9a"/><ellipse cx="76.5" cy="811" rx="5" ry="4.6" fill="none" stroke="#000" stroke-width="1.1"/><rect x="57" y="810" width="1" height="1" fill="#9a9a9a"/><rect x="59" y="810" width="1" height="1" fill="#9a9a9a"/><rect x="61" y="810" width="1" height="1" fill="#9a9a9a"/><rect x="63" y="810" width="1" height="1" fill="#9a9a9a"/><rect x="65" y="810" width="1" height="1" fill="#9a9a9a"/><rect x="67" y="810" width="1" height="1" fill="#9a9a9a"/><rect x="69" y="810" width="1" height="1" fill="#9a9a9a"/></svg>
<svg style="left:0;top:0" width="1920" height="1040" shape-rendering="crispEdges"><rect x="910" y="349" width="448" height="1" fill="#000"/><rect x="1030.5" y="185.5" width="96" height="167" fill="#f3f1e2" stroke="#78a0ea"/><rect x="910" y="349" width="448" height="1" fill="#000"/><rect x="1066" y="188" width="25" height="1" fill="#000"/><rect x="1066" y="189" width="1" height="1" fill="#000"/><rect x="1067" y="190" width="1" height="1" fill="#000"/><rect x="1067" y="191" width="1" height="1" fill="#000"/><rect x="1068" y="192" width="1" height="1" fill="#000"/><rect x="1068" y="193" width="1" height="1" fill="#000"/><rect x="1069" y="194" width="1" height="1" fill="#000"/><rect x="1069" y="195" width="1" height="1" fill="#000"/><rect x="1070" y="196" width="1" height="1" fill="#000"/><rect x="1070" y="197" width="1" height="1" fill="#000"/><rect x="1071" y="198" width="1" height="1" fill="#000"/><rect x="1071" y="199" width="1" height="1" fill="#000"/><rect x="1072" y="200" width="1" height="1" fill="#000"/><rect x="1073" y="201" width="1" height="1" fill="#000"/><rect x="1073" y="202" width="1" height="1" fill="#000"/><rect x="1074" y="203" width="1" height="1" fill="#000"/><rect x="1074" y="204" width="1" height="1" fill="#000"/><rect x="1075" y="205" width="1" height="1" fill="#000"/><rect x="1075" y="206" width="1" height="1" fill="#000"/><rect x="1076" y="207" width="1" height="1" fill="#000"/><rect x="1076" y="208" width="1" height="1" fill="#000"/><rect x="1077" y="209" width="1" height="1" fill="#000"/><rect x="1077" y="210" width="1" height="1" fill="#000"/><rect x="1078" y="211" width="1" height="1" fill="#000"/><rect x="1090" y="189" width="1" height="1" fill="#000"/><rect x="1089" y="190" width="1" height="1" fill="#000"/><rect x="1089" y="191" width="1" height="1" fill="#000"/><rect x="1088" y="192" width="1" height="1" fill="#000"/><rect x="1088" y="193" width="1" height="1" fill="#000"/><rect x="1087" y="194" width="1" height="1" fill="#000"/><rect x="1087" y="195" width="1" height="1" fill="#000"/><rect x="1086" y="196" width="1" height="1" fill="#000"/><rect x="1086" y="197" width="1" height="1" fill="#000"/><rect x="1085" y="198" width="1" height="1" fill="#000"/><rect x="1085" y="199" width="1" height="1" fill="#000"/><rect x="1084" y="200" width="1" height="1" fill="#000"/><rect x="1084" y="201" width="1" height="1" fill="#000"/><rect x="1083" y="202" width="1" height="1" fill="#000"/><rect x="1083" y="203" width="1" height="1" fill="#000"/><rect x="1082" y="204" width="1" height="1" fill="#000"/><rect x="1082" y="205" width="1" height="1" fill="#000"/><rect x="1081" y="206" width="1" height="1" fill="#000"/><rect x="1081" y="207" width="1" height="1" fill="#000"/><rect x="1080" y="208" width="1" height="1" fill="#000"/><rect x="1080" y="209" width="1" height="1" fill="#000"/><rect x="1079" y="210" width="1" height="1" fill="#000"/><rect x="1078" y="211" width="1" height="109" fill="#000"/><rect x="1078" y="320" width="1" height="3" fill="#000"/><rect x="1077" y="320" width="3" height="1" fill="#000"/><rect x="1075" y="322" width="1" height="2" fill="#000"/><rect x="1076" y="324" width="1" height="3" fill="#000"/><rect x="1077" y="327" width="1" height="3" fill="#000"/><rect x="1078" y="330" width="1" height="20" fill="#000"/><rect x="1074" y="295" width="2" height="1" fill="#000"/><rect x="1076" y="294" width="2" height="1" fill="#000"/><rect x="1078" y="293" width="2" height="1" fill="#000"/><rect x="1080" y="292" width="2" height="1" fill="#000"/><rect x="1082" y="291" width="1" height="1" fill="#000"/><rect x="1074" y="298" width="2" height="1" fill="#000"/><rect x="1076" y="297" width="2" height="1" fill="#000"/><rect x="1078" y="296" width="2" height="1" fill="#000"/><rect x="1080" y="295" width="2" height="1" fill="#000"/><rect x="1082" y="294" width="1" height="1" fill="#000"/><rect x="1074" y="301" width="2" height="1" fill="#000"/><rect x="1076" y="300" width="2" height="1" fill="#000"/><rect x="1078" y="299" width="2" height="1" fill="#000"/><rect x="1080" y="298" width="2" height="1" fill="#000"/><rect x="1082" y="297" width="1" height="1" fill="#000"/><rect x="1066" y="217" width="13" height="1" fill="#000"/><rect x="1066" y="217" width="1" height="6" fill="#000"/><rect x="1061" y="223" width="9" height="1" fill="#000"/><rect x="1062" y="224" width="7" height="1" fill="#000"/><rect x="1064" y="225" width="4" height="1" fill="#000"/><rect x="915" y="349" width="1" height="19" fill="#000"/><rect x="915" y="366" width="1" height="3" fill="#000"/><rect x="914" y="366" width="3" height="1" fill="#000"/><rect x="912" y="368" width="1" height="2" fill="#000"/><rect x="913" y="370" width="1" height="3" fill="#000"/><rect x="914" y="373" width="1" height="3" fill="#000"/><rect x="915" y="376" width="1" height="114" fill="#000"/><rect x="911" y="462" width="2" height="1" fill="#000"/><rect x="913" y="461" width="2" height="1" fill="#000"/><rect x="915" y="460" width="2" height="1" fill="#000"/><rect x="917" y="459" width="2" height="1" fill="#000"/><rect x="919" y="458" width="1" height="1" fill="#000"/><rect x="911" y="465" width="2" height="1" fill="#000"/><rect x="913" y="464" width="2" height="1" fill="#000"/><rect x="915" y="463" width="2" height="1" fill="#000"/><rect x="917" y="462" width="2" height="1" fill="#000"/><rect x="919" y="461" width="1" height="1" fill="#000"/><rect x="911" y="468" width="2" height="1" fill="#000"/><rect x="913" y="467" width="2" height="1" fill="#000"/><rect x="915" y="466" width="2" height="1" fill="#000"/><rect x="917" y="465" width="2" height="1" fill="#000"/><rect x="919" y="464" width="1" height="1" fill="#000"/><rect x="915" y="487" width="1" height="4" fill="#000"/><rect x="914" y="489" width="1" height="1" fill="#000"/><rect x="914" y="491" width="1" height="1" fill="#000"/><rect x="912" y="490" width="1" height="2" fill="#000"/><rect x="913" y="492" width="1" height="3" fill="#000"/><rect x="914" y="495" width="1" height="3" fill="#000"/><rect x="915" y="498" width="1" height="20" fill="#000"/><rect x="1166" y="349" width="1" height="19" fill="#000"/><rect x="1166" y="366" width="1" height="3" fill="#000"/><rect x="1165" y="366" width="3" height="1" fill="#000"/><rect x="1163" y="368" width="1" height="2" fill="#000"/><rect x="1164" y="370" width="1" height="3" fill="#000"/><rect x="1165" y="373" width="1" height="3" fill="#000"/><rect x="1166" y="376" width="1" height="124" fill="#000"/><rect x="1162" y="486" width="2" height="1" fill="#000"/><rect x="1164" y="485" width="2" height="1" fill="#000"/><rect x="1166" y="484" width="2" height="1" fill="#000"/><rect x="1168" y="483" width="2" height="1" fill="#000"/><rect x="1170" y="482" width="1" height="1" fill="#000"/><rect x="1162" y="489" width="2" height="1" fill="#000"/><rect x="1164" y="488" width="2" height="1" fill="#000"/><rect x="1166" y="487" width="2" height="1" fill="#000"/><rect x="1168" y="486" width="2" height="1" fill="#000"/><rect x="1170" y="485" width="1" height="1" fill="#000"/><rect x="1164" y="499" width="4" height="1" fill="#000"/><rect x="1164" y="516" width="4" height="1" fill="#000"/><rect x="1161" y="500" width="3" height="1" fill="#000"/><rect x="1161" y="515" width="3" height="1" fill="#000"/><rect x="1168" y="500" width="3" height="1" fill="#000"/><rect x="1168" y="515" width="3" height="1" fill="#000"/><rect x="1160" y="501" width="1" height="1" fill="#000"/><rect x="1160" y="514" width="1" height="1" fill="#000"/><rect x="1171" y="501" width="1" height="1" fill="#000"/><rect x="1171" y="514" width="1" height="1" fill="#000"/><rect x="1159" y="502" width="1" height="1" fill="#000"/><rect x="1159" y="513" width="1" height="1" fill="#000"/><rect x="1172" y="502" width="1" height="1" fill="#000"/><rect x="1172" y="513" width="1" height="1" fill="#000"/><rect x="1158" y="503" width="1" height="1" fill="#000"/><rect x="1158" y="512" width="1" height="1" fill="#000"/><rect x="1173" y="503" width="1" height="1" fill="#000"/><rect x="1173" y="512" width="1" height="1" fill="#000"/><rect x="1158" y="504" width="1" height="1" fill="#000"/><rect x="1158" y="511" width="1" height="1" fill="#000"/><rect x="1173" y="504" width="1" height="1" fill="#000"/><rect x="1173" y="511" width="1" height="1" fill="#000"/><rect x="1158" y="505" width="1" height="1" fill="#000"/><rect x="1158" y="510" width="1" height="1" fill="#000"/><rect x="1173" y="505" width="1" height="1" fill="#000"/><rect x="1173" y="510" width="1" height="1" fill="#000"/><rect x="1157" y="506" width="1" height="1" fill="#000"/><rect x="1157" y="509" width="1" height="1" fill="#000"/><rect x="1174" y="506" width="1" height="1" fill="#000"/><rect x="1174" y="509" width="1" height="1" fill="#000"/><rect x="1157" y="507" width="1" height="1" fill="#000"/><rect x="1157" y="508" width="1" height="1" fill="#000"/><rect x="1174" y="507" width="1" height="1" fill="#000"/><rect x="1174" y="508" width="1" height="1" fill="#000"/><rect x="1157" y="508" width="1" height="1" fill="#000"/><rect x="1157" y="507" width="1" height="1" fill="#000"/><rect x="1174" y="508" width="1" height="1" fill="#000"/><rect x="1174" y="507" width="1" height="1" fill="#000"/><rect x="1157" y="509" width="1" height="1" fill="#000"/><rect x="1157" y="506" width="1" height="1" fill="#000"/><rect x="1174" y="509" width="1" height="1" fill="#000"/><rect x="1174" y="506" width="1" height="1" fill="#000"/><rect x="1161" y="503" width="1" height="1" fill="#000"/><rect x="1166" y="509" width="1" height="1" fill="#000"/><rect x="1162" y="504" width="1" height="1" fill="#000"/><rect x="1167" y="510" width="1" height="1" fill="#000"/><rect x="1163" y="505" width="1" height="1" fill="#000"/><rect x="1168" y="511" width="1" height="1" fill="#000"/><rect x="1164" y="506" width="1" height="1" fill="#000"/><rect x="1169" y="512" width="1" height="1" fill="#000"/><rect x="1165" y="507" width="1" height="1" fill="#000"/><rect x="1170" y="513" width="1" height="1" fill="#000"/><rect x="1166" y="508" width="1" height="1" fill="#000"/><rect x="1171" y="514" width="1" height="1" fill="#000"/><rect x="1172" y="502" width="1" height="1" fill="#000"/><rect x="1171" y="503" width="1" height="1" fill="#000"/><rect x="1170" y="504" width="1" height="1" fill="#000"/><rect x="1169" y="505" width="1" height="1" fill="#000"/><rect x="1168" y="506" width="1" height="1" fill="#000"/><rect x="1167" y="507" width="1" height="1" fill="#000"/><rect x="1166" y="508" width="1" height="1" fill="#000"/><rect x="1166" y="509" width="1" height="1" fill="#000"/><rect x="1165" y="510" width="1" height="1" fill="#000"/><rect x="1164" y="511" width="1" height="1" fill="#000"/><rect x="1163" y="512" width="1" height="1" fill="#000"/><rect x="1162" y="513" width="1" height="1" fill="#000"/><rect x="1161" y="514" width="1" height="1" fill="#000"/><rect x="1241" y="349" width="1" height="19" fill="#000"/><rect x="1241" y="366" width="1" height="3" fill="#000"/><rect x="1240" y="366" width="3" height="1" fill="#000"/><rect x="1238" y="368" width="1" height="2" fill="#000"/><rect x="1239" y="370" width="1" height="3" fill="#000"/><rect x="1240" y="373" width="1" height="3" fill="#000"/><rect x="1241" y="376" width="1" height="124" fill="#000"/><rect x="1237" y="480" width="2" height="1" fill="#000"/><rect x="1239" y="479" width="2" height="1" fill="#000"/><rect x="1241" y="478" width="2" height="1" fill="#000"/><rect x="1243" y="477" width="2" height="1" fill="#000"/><rect x="1245" y="476" width="1" height="1" fill="#000"/><rect x="1237" y="483" width="2" height="1" fill="#000"/><rect x="1239" y="482" width="2" height="1" fill="#000"/><rect x="1241" y="481" width="2" height="1" fill="#000"/><rect x="1243" y="480" width="2" height="1" fill="#000"/><rect x="1245" y="479" width="1" height="1" fill="#000"/><rect x="1237" y="486" width="2" height="1" fill="#000"/><rect x="1239" y="485" width="2" height="1" fill="#000"/><rect x="1241" y="484" width="2" height="1" fill="#000"/><rect x="1243" y="483" width="2" height="1" fill="#000"/><rect x="1245" y="482" width="1" height="1" fill="#000"/><rect x="1237" y="489" width="2" height="1" fill="#000"/><rect x="1239" y="488" width="2" height="1" fill="#000"/><rect x="1241" y="487" width="2" height="1" fill="#000"/><rect x="1243" y="486" width="2" height="1" fill="#000"/><rect x="1245" y="485" width="1" height="1" fill="#000"/><rect x="1239" y="499" width="4" height="1" fill="#000"/><rect x="1239" y="516" width="4" height="1" fill="#000"/><rect x="1236" y="500" width="3" height="1" fill="#000"/><rect x="1236" y="515" width="3" height="1" fill="#000"/><rect x="1243" y="500" width="3" height="1" fill="#000"/><rect x="1243" y="515" width="3" height="1" fill="#000"/><rect x="1235" y="501" width="1" height="1" fill="#000"/><rect x="1235" y="514" width="1" height="1" fill="#000"/><rect x="1246" y="501" width="1" height="1" fill="#000"/><rect x="1246" y="514" width="1" height="1" fill="#000"/><rect x="1234" y="502" width="1" height="1" fill="#000"/><rect x="1234" y="513" width="1" height="1" fill="#000"/><rect x="1247" y="502" width="1" height="1" fill="#000"/><rect x="1247" y="513" width="1" height="1" fill="#000"/><rect x="1233" y="503" width="1" height="1" fill="#000"/><rect x="1233" y="512" width="1" height="1" fill="#000"/><rect x="1248" y="503" width="1" height="1" fill="#000"/><rect x="1248" y="512" width="1" height="1" fill="#000"/><rect x="1233" y="504" width="1" height="1" fill="#000"/><rect x="1233" y="511" width="1" height="1" fill="#000"/><rect x="1248" y="504" width="1" height="1" fill="#000"/><rect x="1248" y="511" width="1" height="1" fill="#000"/><rect x="1233" y="505" width="1" height="1" fill="#000"/><rect x="1233" y="510" width="1" height="1" fill="#000"/><rect x="1248" y="505" width="1" height="1" fill="#000"/><rect x="1248" y="510" width="1" height="1" fill="#000"/><rect x="1232" y="506" width="1" height="1" fill="#000"/><rect x="1232" y="509" width="1" height="1" fill="#000"/><rect x="1249" y="506" width="1" height="1" fill="#000"/><rect x="1249" y="509" width="1" height="1" fill="#000"/><rect x="1232" y="507" width="1" height="1" fill="#000"/><rect x="1232" y="508" width="1" height="1" fill="#000"/><rect x="1249" y="507" width="1" height="1" fill="#000"/><rect x="1249" y="508" width="1" height="1" fill="#000"/><rect x="1232" y="508" width="1" height="1" fill="#000"/><rect x="1232" y="507" width="1" height="1" fill="#000"/><rect x="1249" y="508" width="1" height="1" fill="#000"/><rect x="1249" y="507" width="1" height="1" fill="#000"/><rect x="1232" y="509" width="1" height="1" fill="#000"/><rect x="1232" y="506" width="1" height="1" fill="#000"/><rect x="1249" y="509" width="1" height="1" fill="#000"/><rect x="1249" y="506" width="1" height="1" fill="#000"/><rect x="1357" y="349" width="1" height="5" fill="#000"/><line x1="1355" y1="355" x2="1357.5" y2="361" stroke="#000" stroke-width="1"/><rect x="1357" y="361" width="1" height="8" fill="#000"/><rect x="1352" y="368" width="289" height="1" fill="#000"/><rect x="1359" y="359" width="3" height="1" fill="#000"/><rect x="1365" y="359" width="3" height="1" fill="#000"/><rect x="1371" y="359" width="3" height="1" fill="#000"/><rect x="1377" y="359" width="3" height="1" fill="#000"/><rect x="1383" y="359" width="3" height="1" fill="#000"/><rect x="1389" y="359" width="3" height="1" fill="#000"/><rect x="1395" y="359" width="3" height="1" fill="#000"/><rect x="1401" y="359" width="3" height="1" fill="#000"/><rect x="1407" y="359" width="3" height="1" fill="#000"/><rect x="1413" y="359" width="3" height="1" fill="#000"/><rect x="1419" y="359" width="3" height="1" fill="#000"/><rect x="1425" y="359" width="3" height="1" fill="#000"/><rect x="1431" y="359" width="3" height="1" fill="#000"/><rect x="1437" y="359" width="3" height="1" fill="#000"/><rect x="1443" y="359" width="3" height="1" fill="#000"/><rect x="1449" y="359" width="3" height="1" fill="#000"/><rect x="1455" y="359" width="3" height="1" fill="#000"/><rect x="1461" y="359" width="3" height="1" fill="#000"/><rect x="1467" y="359" width="3" height="1" fill="#000"/><rect x="1473" y="359" width="3" height="1" fill="#000"/><rect x="1479" y="359" width="3" height="1" fill="#000"/><rect x="1485" y="359" width="3" height="1" fill="#000"/><rect x="1491" y="359" width="3" height="1" fill="#000"/><rect x="1496" y="347" width="1" height="2" fill="#000"/><rect x="1496" y="351" width="1" height="2" fill="#000"/><rect x="1496" y="355" width="1" height="2" fill="#000"/><rect x="1496" y="358" width="1" height="2" fill="#000"/><rect x="1500" y="345" width="3" height="1" fill="#000"/><rect x="1506" y="345" width="3" height="1" fill="#000"/><rect x="1512" y="345" width="3" height="1" fill="#000"/><rect x="1518" y="345" width="3" height="1" fill="#000"/><rect x="1524" y="345" width="3" height="1" fill="#000"/><rect x="1530" y="345" width="3" height="1" fill="#000"/><rect x="1536" y="345" width="3" height="1" fill="#000"/><rect x="1542" y="345" width="3" height="1" fill="#000"/><rect x="1548" y="345" width="3" height="1" fill="#000"/><rect x="1554" y="345" width="3" height="1" fill="#000"/><rect x="1560" y="345" width="3" height="1" fill="#000"/><rect x="1566" y="345" width="3" height="1" fill="#000"/><rect x="1572" y="345" width="3" height="1" fill="#000"/><rect x="1578" y="345" width="3" height="1" fill="#000"/><rect x="1584" y="345" width="3" height="1" fill="#000"/><rect x="1590" y="345" width="3" height="1" fill="#000"/><rect x="1596" y="345" width="3" height="1" fill="#000"/><rect x="1602" y="345" width="3" height="1" fill="#000"/><rect x="1608" y="345" width="3" height="1" fill="#000"/><rect x="1614" y="345" width="3" height="1" fill="#000"/><rect x="1620" y="345" width="3" height="1" fill="#000"/><rect x="1626" y="345" width="3" height="1" fill="#000"/><rect x="1632" y="345" width="3" height="1" fill="#000"/><rect x="1496" y="343" width="2" height="1" fill="#000"/><rect x="1496" y="346" width="2" height="1" fill="#000"/><rect x="1495" y="344" width="1" height="2" fill="#000"/><rect x="1498" y="344" width="1" height="2" fill="#000"/><rect x="1635" y="223" width="4" height="1" fill="#000"/><rect x="1635" y="240" width="4" height="1" fill="#000"/><rect x="1632" y="224" width="3" height="1" fill="#000"/><rect x="1632" y="239" width="3" height="1" fill="#000"/><rect x="1639" y="224" width="3" height="1" fill="#000"/><rect x="1639" y="239" width="3" height="1" fill="#000"/><rect x="1631" y="225" width="1" height="1" fill="#000"/><rect x="1631" y="238" width="1" height="1" fill="#000"/><rect x="1642" y="225" width="1" height="1" fill="#000"/><rect x="1642" y="238" width="1" height="1" fill="#000"/><rect x="1630" y="226" width="1" height="1" fill="#000"/><rect x="1630" y="237" width="1" height="1" fill="#000"/><rect x="1643" y="226" width="1" height="1" fill="#000"/><rect x="1643" y="237" width="1" height="1" fill="#000"/><rect x="1629" y="227" width="1" height="1" fill="#000"/><rect x="1629" y="236" width="1" height="1" fill="#000"/><rect x="1644" y="227" width="1" height="1" fill="#000"/><rect x="1644" y="236" width="1" height="1" fill="#000"/><rect x="1629" y="228" width="1" height="1" fill="#000"/><rect x="1629" y="235" width="1" height="1" fill="#000"/><rect x="1644" y="228" width="1" height="1" fill="#000"/><rect x="1644" y="235" width="1" height="1" fill="#000"/><rect x="1629" y="229" width="1" height="1" fill="#000"/><rect x="1629" y="234" width="1" height="1" fill="#000"/><rect x="1644" y="229" width="1" height="1" fill="#000"/><rect x="1644" y="234" width="1" height="1" fill="#000"/><rect x="1628" y="230" width="1" height="1" fill="#000"/><rect x="1628" y="233" width="1" height="1" fill="#000"/><rect x="1645" y="230" width="1" height="1" fill="#000"/><rect x="1645" y="233" width="1" height="1" fill="#000"/><rect x="1628" y="231" width="1" height="1" fill="#000"/><rect x="1628" y="232" width="1" height="1" fill="#000"/><rect x="1645" y="231" width="1" height="1" fill="#000"/><rect x="1645" y="232" width="1" height="1" fill="#000"/><rect x="1628" y="232" width="1" height="1" fill="#000"/><rect x="1628" y="231" width="1" height="1" fill="#000"/><rect x="1645" y="232" width="1" height="1" fill="#000"/><rect x="1645" y="231" width="1" height="1" fill="#000"/><rect x="1628" y="233" width="1" height="1" fill="#000"/><rect x="1628" y="230" width="1" height="1" fill="#000"/><rect x="1645" y="233" width="1" height="1" fill="#000"/><rect x="1645" y="230" width="1" height="1" fill="#000"/><rect x="1631" y="231" width="1" height="1" fill="#000"/><rect x="1632" y="230" width="1" height="1" fill="#000"/><rect x="1633" y="229" width="1" height="1" fill="#000"/><rect x="1634" y="229" width="1" height="1" fill="#000"/><rect x="1635" y="230" width="1" height="1" fill="#000"/><rect x="1636" y="231" width="1" height="1" fill="#000"/><rect x="1637" y="232" width="1" height="1" fill="#000"/><rect x="1638" y="233" width="1" height="1" fill="#000"/><rect x="1639" y="233" width="1" height="1" fill="#000"/><rect x="1640" y="232" width="1" height="1" fill="#000"/><rect x="1637" y="241" width="1" height="101" fill="#000"/><rect x="1637" y="340" width="1" height="3" fill="#000"/><rect x="1636" y="340" width="3" height="1" fill="#000"/><rect x="1634" y="342" width="1" height="2" fill="#000"/><rect x="1635" y="344" width="1" height="3" fill="#000"/><rect x="1636" y="347" width="1" height="3" fill="#000"/><rect x="1637" y="349" width="1" height="39" fill="#000"/><rect x="1633" y="310" width="2" height="1" fill="#000"/><rect x="1635" y="309" width="2" height="1" fill="#000"/><rect x="1637" y="308" width="2" height="1" fill="#000"/><rect x="1639" y="307" width="2" height="1" fill="#000"/><rect x="1641" y="306" width="1" height="1" fill="#000"/><rect x="1633" y="313" width="2" height="1" fill="#000"/><rect x="1635" y="312" width="2" height="1" fill="#000"/><rect x="1637" y="311" width="2" height="1" fill="#000"/><rect x="1639" y="310" width="2" height="1" fill="#000"/><rect x="1641" y="309" width="1" height="1" fill="#000"/><rect x="1633" y="316" width="2" height="1" fill="#000"/><rect x="1635" y="315" width="2" height="1" fill="#000"/><rect x="1637" y="314" width="2" height="1" fill="#000"/><rect x="1639" y="313" width="2" height="1" fill="#000"/><rect x="1641" y="312" width="1" height="1" fill="#000"/><rect x="1633" y="319" width="2" height="1" fill="#000"/><rect x="1635" y="318" width="2" height="1" fill="#000"/><rect x="1637" y="317" width="2" height="1" fill="#000"/><rect x="1639" y="316" width="2" height="1" fill="#000"/><rect x="1641" y="315" width="1" height="1" fill="#000"/><rect x="1637" y="386" width="1" height="3" fill="#000"/><rect x="1636" y="386" width="3" height="1" fill="#000"/><rect x="1634" y="388" width="1" height="2" fill="#000"/><rect x="1635" y="390" width="1" height="3" fill="#000"/><rect x="1636" y="393" width="1" height="3" fill="#000"/><rect x="1637" y="395" width="1" height="101" fill="#000"/><rect x="1633" y="481" width="2" height="1" fill="#000"/><rect x="1635" y="480" width="2" height="1" fill="#000"/><rect x="1637" y="479" width="2" height="1" fill="#000"/><rect x="1639" y="478" width="2" height="1" fill="#000"/><rect x="1641" y="477" width="1" height="1" fill="#000"/><rect x="1633" y="484" width="2" height="1" fill="#000"/><rect x="1635" y="483" width="2" height="1" fill="#000"/><rect x="1637" y="482" width="2" height="1" fill="#000"/><rect x="1639" y="481" width="2" height="1" fill="#000"/><rect x="1641" y="480" width="1" height="1" fill="#000"/><rect x="1633" y="487" width="2" height="1" fill="#000"/><rect x="1635" y="486" width="2" height="1" fill="#000"/><rect x="1637" y="485" width="2" height="1" fill="#000"/><rect x="1639" y="484" width="2" height="1" fill="#000"/><rect x="1641" y="483" width="1" height="1" fill="#000"/><rect x="1631.5" y="495.5" width="12" height="5" fill="none" stroke="#000"/><rect x="1631.5" y="504.5" width="12" height="5" fill="none" stroke="#000"/><line x1="1633" y1="499.5" x2="1642" y2="496.5" stroke="#000" stroke-width="1"/><line x1="1633" y1="508.5" x2="1642" y2="505.5" stroke="#000" stroke-width="1"/><rect x="1637" y="500" width="1" height="5" fill="#000"/><rect x="1637" y="509" width="1" height="8" fill="#000"/><rect x="1621" y="502" width="17" height="1" fill="#000"/><rect x="1622" y="500" width="1" height="5" fill="#000"/><rect x="1624" y="500" width="1" height="5" fill="#000"/><rect x="1626" y="500" width="1" height="5" fill="#000"/><rect x="1634" y="520" width="1" height="2" fill="#000"/><rect x="1635" y="522" width="1" height="3" fill="#000"/><rect x="1636" y="525" width="1" height="3" fill="#000"/><rect x="1637" y="528" width="1" height="6" fill="#000"/><rect x="1493" y="533" width="287" height="1" fill="#000"/><rect x="1498" y="533" width="1" height="19" fill="#000"/><rect x="1498" y="548" width="1" height="4" fill="#000"/><rect x="1497" y="550" width="1" height="1" fill="#000"/><rect x="1497" y="552" width="1" height="1" fill="#000"/><rect x="1495" y="551" width="1" height="2" fill="#000"/><rect x="1496" y="553" width="1" height="3" fill="#000"/><rect x="1497" y="556" width="1" height="3" fill="#000"/><rect x="1498" y="559" width="1" height="104" fill="#000"/><rect x="1494" y="649" width="2" height="1" fill="#000"/><rect x="1496" y="648" width="2" height="1" fill="#000"/><rect x="1498" y="647" width="2" height="1" fill="#000"/><rect x="1500" y="646" width="2" height="1" fill="#000"/><rect x="1502" y="645" width="1" height="1" fill="#000"/><rect x="1494" y="652" width="2" height="1" fill="#000"/><rect x="1496" y="651" width="2" height="1" fill="#000"/><rect x="1498" y="650" width="2" height="1" fill="#000"/><rect x="1500" y="649" width="2" height="1" fill="#000"/><rect x="1502" y="648" width="1" height="1" fill="#000"/><rect x="1494" y="655" width="2" height="1" fill="#000"/><rect x="1496" y="654" width="2" height="1" fill="#000"/><rect x="1498" y="653" width="2" height="1" fill="#000"/><rect x="1500" y="652" width="2" height="1" fill="#000"/><rect x="1502" y="651" width="1" height="1" fill="#000"/><rect x="1487" y="678" width="1" height="1" fill="#000"/><rect x="1508" y="678" width="1" height="1" fill="#000"/><rect x="1495" y="685" width="6" height="1" fill="#000"/><rect x="1489" y="681" width="1" height="1" fill="#000"/><rect x="1506" y="681" width="1" height="1" fill="#000"/><rect x="1492" y="663" width="3" height="1" fill="#000"/><rect x="1501" y="663" width="3" height="1" fill="#000"/><rect x="1495" y="662" width="6" height="1" fill="#000"/><rect x="1486" y="676" width="1" height="1" fill="#000"/><rect x="1509" y="676" width="1" height="1" fill="#000"/><rect x="1487" y="670" width="1" height="1" fill="#000"/><rect x="1508" y="670" width="1" height="1" fill="#000"/><rect x="1492" y="684" width="3" height="1" fill="#000"/><rect x="1501" y="684" width="3" height="1" fill="#000"/><rect x="1486" y="671" width="1" height="1" fill="#000"/><rect x="1509" y="671" width="1" height="1" fill="#000"/><rect x="1487" y="679" width="1" height="1" fill="#000"/><rect x="1508" y="679" width="1" height="1" fill="#000"/><rect x="1486" y="674" width="1" height="1" fill="#000"/><rect x="1509" y="674" width="1" height="1" fill="#000"/><rect x="1488" y="680" width="1" height="1" fill="#000"/><rect x="1507" y="680" width="1" height="1" fill="#000"/><rect x="1490" y="682" width="1" height="1" fill="#000"/><rect x="1505" y="682" width="1" height="1" fill="#000"/><rect x="1489" y="666" width="1" height="1" fill="#000"/><rect x="1506" y="666" width="1" height="1" fill="#000"/><rect x="1487" y="668" width="1" height="1" fill="#000"/><rect x="1508" y="668" width="1" height="1" fill="#000"/><rect x="1486" y="672" width="1" height="1" fill="#000"/><rect x="1509" y="672" width="1" height="1" fill="#000"/><rect x="1487" y="677" width="1" height="1" fill="#000"/><rect x="1508" y="677" width="1" height="1" fill="#000"/><rect x="1486" y="675" width="1" height="1" fill="#000"/><rect x="1509" y="675" width="1" height="1" fill="#000"/><rect x="1491" y="683" width="1" height="1" fill="#000"/><rect x="1504" y="683" width="1" height="1" fill="#000"/><rect x="1488" y="667" width="1" height="1" fill="#000"/><rect x="1507" y="667" width="1" height="1" fill="#000"/><rect x="1487" y="669" width="1" height="1" fill="#000"/><rect x="1508" y="669" width="1" height="1" fill="#000"/><rect x="1486" y="673" width="1" height="1" fill="#000"/><rect x="1509" y="673" width="1" height="1" fill="#000"/><rect x="1491" y="664" width="1" height="1" fill="#000"/><rect x="1504" y="664" width="1" height="1" fill="#000"/><rect x="1490" y="665" width="1" height="1" fill="#000"/><rect x="1505" y="665" width="1" height="1" fill="#000"/><rect x="1488" y="679" width="1" height="1" fill="#000"/><rect x="1507" y="679" width="1" height="1" fill="#000"/><rect x="1487" y="681" width="1" height="1" fill="#000"/><rect x="1508" y="681" width="1" height="1" fill="#000"/><rect x="1489" y="678" width="1" height="1" fill="#000"/><rect x="1506" y="678" width="1" height="1" fill="#000"/><rect x="1486" y="685" width="1" height="1" fill="#000"/><rect x="1509" y="685" width="1" height="1" fill="#000"/><rect x="1492" y="675" width="3" height="1" fill="#000"/><rect x="1501" y="675" width="3" height="1" fill="#000"/><rect x="1486" y="688" width="1" height="1" fill="#000"/><rect x="1509" y="688" width="1" height="1" fill="#000"/><rect x="1487" y="690" width="1" height="1" fill="#000"/><rect x="1508" y="690" width="1" height="1" fill="#000"/><rect x="1495" y="697" width="6" height="1" fill="#000"/><rect x="1489" y="693" width="1" height="1" fill="#000"/><rect x="1506" y="693" width="1" height="1" fill="#000"/><rect x="1495" y="674" width="6" height="1" fill="#000"/><rect x="1487" y="682" width="1" height="1" fill="#000"/><rect x="1508" y="682" width="1" height="1" fill="#000"/><rect x="1492" y="696" width="3" height="1" fill="#000"/><rect x="1501" y="696" width="3" height="1" fill="#000"/><rect x="1486" y="683" width="1" height="1" fill="#000"/><rect x="1509" y="683" width="1" height="1" fill="#000"/><rect x="1487" y="691" width="1" height="1" fill="#000"/><rect x="1508" y="691" width="1" height="1" fill="#000"/><rect x="1486" y="686" width="1" height="1" fill="#000"/><rect x="1509" y="686" width="1" height="1" fill="#000"/><rect x="1488" y="692" width="1" height="1" fill="#000"/><rect x="1507" y="692" width="1" height="1" fill="#000"/><rect x="1490" y="694" width="1" height="1" fill="#000"/><rect x="1505" y="694" width="1" height="1" fill="#000"/><rect x="1487" y="680" width="1" height="1" fill="#000"/><rect x="1508" y="680" width="1" height="1" fill="#000"/><rect x="1486" y="684" width="1" height="1" fill="#000"/><rect x="1509" y="684" width="1" height="1" fill="#000"/><rect x="1487" y="689" width="1" height="1" fill="#000"/><rect x="1508" y="689" width="1" height="1" fill="#000"/><rect x="1486" y="687" width="1" height="1" fill="#000"/><rect x="1509" y="687" width="1" height="1" fill="#000"/><rect x="1491" y="695" width="1" height="1" fill="#000"/><rect x="1504" y="695" width="1" height="1" fill="#000"/><rect x="1491" y="676" width="1" height="1" fill="#000"/><rect x="1504" y="676" width="1" height="1" fill="#000"/><rect x="1490" y="677" width="1" height="1" fill="#000"/><rect x="1505" y="677" width="1" height="1" fill="#000"/><rect x="1498" y="697" width="1" height="10" fill="#000"/><rect x="1467" y="686" width="31" height="1" fill="#000"/><rect x="1467" y="699" width="19" height="1" fill="#000"/><rect x="1467" y="686" width="1" height="4" fill="#000"/><rect x="1467" y="695" width="1" height="5" fill="#000"/><rect x="1466.5" y="689.5" width="3" height="6" fill="none" stroke="#000"/><rect x="1470.5" y="691.5" width="7" height="3" fill="none" stroke="#000"/><rect x="1474" y="686" width="1" height="6" fill="#000"/><rect x="1474" y="694" width="1" height="6" fill="#000"/><rect x="1485" y="686" width="1" height="5" fill="#000"/><line x1="1485" y1="690" x2="1484" y2="692" stroke="#000" stroke-width="1"/><rect x="1485" y="694" width="1" height="11" fill="#000"/><rect x="1480" y="704" width="10" height="2" fill="#000"/><rect x="1776" y="533" width="1" height="19" fill="#000"/><rect x="1776" y="548" width="1" height="4" fill="#000"/><rect x="1775" y="550" width="1" height="1" fill="#000"/><rect x="1775" y="552" width="1" height="1" fill="#000"/><rect x="1773" y="551" width="1" height="2" fill="#000"/><rect x="1774" y="553" width="1" height="3" fill="#000"/><rect x="1775" y="556" width="1" height="3" fill="#000"/><rect x="1776" y="559" width="1" height="139" fill="#000"/><rect x="1772" y="675" width="2" height="1" fill="#000"/><rect x="1774" y="674" width="2" height="1" fill="#000"/><rect x="1776" y="673" width="2" height="1" fill="#000"/><rect x="1778" y="672" width="2" height="1" fill="#000"/><rect x="1780" y="671" width="1" height="1" fill="#000"/><rect x="1772" y="678" width="2" height="1" fill="#000"/><rect x="1774" y="677" width="2" height="1" fill="#000"/><rect x="1776" y="676" width="2" height="1" fill="#000"/><rect x="1778" y="675" width="2" height="1" fill="#000"/><rect x="1780" y="674" width="1" height="1" fill="#000"/><rect x="1767" y="697" width="18" height="1" fill="#000"/><rect x="1771" y="698" width="3" height="1" fill="#000"/><rect x="1778" y="698" width="3" height="1" fill="#000"/><rect x="1770" y="699" width="1" height="1" fill="#000"/><rect x="1781" y="699" width="1" height="1" fill="#000"/><rect x="1769" y="700" width="1" height="1" fill="#000"/><rect x="1782" y="700" width="1" height="1" fill="#000"/><rect x="1768" y="701" width="1" height="3" fill="#000"/><rect x="1783" y="701" width="1" height="3" fill="#000"/><rect x="1767" y="704" width="1" height="2" fill="#000"/><rect x="1784" y="704" width="1" height="2" fill="#000"/><rect x="1352" y="706" width="273" height="1" fill="#000"/><rect x="1352" y="706" width="1" height="5" fill="#000"/><path d="M1348 711 L1357 711 L1352.5 716 Z" fill="#000" stroke="#000" stroke-width="0.5"/><rect x="1375" y="706" width="1" height="20" fill="#000"/><rect x="1375" y="722" width="1" height="4" fill="#000"/><rect x="1374" y="724" width="1" height="1" fill="#000"/><rect x="1374" y="726" width="1" height="1" fill="#000"/><rect x="1372" y="725" width="1" height="2" fill="#000"/><rect x="1373" y="727" width="1" height="3" fill="#000"/><rect x="1374" y="730" width="1" height="3" fill="#000"/><rect x="1375" y="733" width="1" height="97" fill="#000"/><rect x="1371" y="814" width="2" height="1" fill="#000"/><rect x="1373" y="813" width="2" height="1" fill="#000"/><rect x="1375" y="812" width="2" height="1" fill="#000"/><rect x="1377" y="811" width="2" height="1" fill="#000"/><rect x="1379" y="810" width="1" height="1" fill="#000"/><rect x="1371" y="817" width="2" height="1" fill="#000"/><rect x="1373" y="816" width="2" height="1" fill="#000"/><rect x="1375" y="815" width="2" height="1" fill="#000"/><rect x="1377" y="814" width="2" height="1" fill="#000"/><rect x="1379" y="813" width="1" height="1" fill="#000"/><rect x="1371" y="820" width="2" height="1" fill="#000"/><rect x="1373" y="819" width="2" height="1" fill="#000"/><rect x="1375" y="818" width="2" height="1" fill="#000"/><rect x="1377" y="817" width="2" height="1" fill="#000"/><rect x="1379" y="816" width="1" height="1" fill="#000"/><rect x="1373" y="829" width="4" height="1" fill="#000"/><rect x="1373" y="846" width="4" height="1" fill="#000"/><rect x="1370" y="830" width="3" height="1" fill="#000"/><rect x="1370" y="845" width="3" height="1" fill="#000"/><rect x="1377" y="830" width="3" height="1" fill="#000"/><rect x="1377" y="845" width="3" height="1" fill="#000"/><rect x="1369" y="831" width="1" height="1" fill="#000"/><rect x="1369" y="844" width="1" height="1" fill="#000"/><rect x="1380" y="831" width="1" height="1" fill="#000"/><rect x="1380" y="844" width="1" height="1" fill="#000"/><rect x="1368" y="832" width="1" height="1" fill="#000"/><rect x="1368" y="843" width="1" height="1" fill="#000"/><rect x="1381" y="832" width="1" height="1" fill="#000"/><rect x="1381" y="843" width="1" height="1" fill="#000"/><rect x="1367" y="833" width="1" height="1" fill="#000"/><rect x="1367" y="842" width="1" height="1" fill="#000"/><rect x="1382" y="833" width="1" height="1" fill="#000"/><rect x="1382" y="842" width="1" height="1" fill="#000"/><rect x="1367" y="834" width="1" height="1" fill="#000"/><rect x="1367" y="841" width="1" height="1" fill="#000"/><rect x="1382" y="834" width="1" height="1" fill="#000"/><rect x="1382" y="841" width="1" height="1" fill="#000"/><rect x="1367" y="835" width="1" height="1" fill="#000"/><rect x="1367" y="840" width="1" height="1" fill="#000"/><rect x="1382" y="835" width="1" height="1" fill="#000"/><rect x="1382" y="840" width="1" height="1" fill="#000"/><rect x="1366" y="836" width="1" height="1" fill="#000"/><rect x="1366" y="839" width="1" height="1" fill="#000"/><rect x="1383" y="836" width="1" height="1" fill="#000"/><rect x="1383" y="839" width="1" height="1" fill="#000"/><rect x="1366" y="837" width="1" height="1" fill="#000"/><rect x="1366" y="838" width="1" height="1" fill="#000"/><rect x="1383" y="837" width="1" height="1" fill="#000"/><rect x="1383" y="838" width="1" height="1" fill="#000"/><rect x="1366" y="838" width="1" height="1" fill="#000"/><rect x="1366" y="837" width="1" height="1" fill="#000"/><rect x="1383" y="838" width="1" height="1" fill="#000"/><rect x="1383" y="837" width="1" height="1" fill="#000"/><rect x="1366" y="839" width="1" height="1" fill="#000"/><rect x="1366" y="836" width="1" height="1" fill="#000"/><rect x="1383" y="839" width="1" height="1" fill="#000"/><rect x="1383" y="836" width="1" height="1" fill="#000"/><rect x="1370" y="833" width="1" height="1" fill="#000"/><rect x="1375" y="839" width="1" height="1" fill="#000"/><rect x="1371" y="834" width="1" height="1" fill="#000"/><rect x="1376" y="840" width="1" height="1" fill="#000"/><rect x="1372" y="835" width="1" height="1" fill="#000"/><rect x="1377" y="841" width="1" height="1" fill="#000"/><rect x="1373" y="836" width="1" height="1" fill="#000"/><rect x="1378" y="842" width="1" height="1" fill="#000"/><rect x="1374" y="837" width="1" height="1" fill="#000"/><rect x="1379" y="843" width="1" height="1" fill="#000"/><rect x="1375" y="838" width="1" height="1" fill="#000"/><rect x="1380" y="844" width="1" height="1" fill="#000"/><rect x="1381" y="832" width="1" height="1" fill="#000"/><rect x="1380" y="833" width="1" height="1" fill="#000"/><rect x="1379" y="834" width="1" height="1" fill="#000"/><rect x="1378" y="835" width="1" height="1" fill="#000"/><rect x="1377" y="836" width="1" height="1" fill="#000"/><rect x="1376" y="837" width="1" height="1" fill="#000"/><rect x="1375" y="838" width="1" height="1" fill="#000"/><rect x="1375" y="839" width="1" height="1" fill="#000"/><rect x="1374" y="840" width="1" height="1" fill="#000"/><rect x="1373" y="841" width="1" height="1" fill="#000"/><rect x="1372" y="842" width="1" height="1" fill="#000"/><rect x="1371" y="843" width="1" height="1" fill="#000"/><rect x="1370" y="844" width="1" height="1" fill="#000"/><rect x="1432" y="706" width="1" height="20" fill="#000"/><rect x="1432" y="722" width="1" height="4" fill="#000"/><rect x="1431" y="724" width="1" height="1" fill="#000"/><rect x="1431" y="726" width="1" height="1" fill="#000"/><rect x="1429" y="725" width="1" height="2" fill="#000"/><rect x="1430" y="727" width="1" height="3" fill="#000"/><rect x="1431" y="730" width="1" height="3" fill="#000"/><rect x="1432" y="733" width="1" height="97" fill="#000"/><rect x="1428" y="814" width="2" height="1" fill="#000"/><rect x="1430" y="813" width="2" height="1" fill="#000"/><rect x="1432" y="812" width="2" height="1" fill="#000"/><rect x="1434" y="811" width="2" height="1" fill="#000"/><rect x="1436" y="810" width="1" height="1" fill="#000"/><rect x="1428" y="817" width="2" height="1" fill="#000"/><rect x="1430" y="816" width="2" height="1" fill="#000"/><rect x="1432" y="815" width="2" height="1" fill="#000"/><rect x="1434" y="814" width="2" height="1" fill="#000"/><rect x="1436" y="813" width="1" height="1" fill="#000"/><rect x="1428" y="820" width="2" height="1" fill="#000"/><rect x="1430" y="819" width="2" height="1" fill="#000"/><rect x="1432" y="818" width="2" height="1" fill="#000"/><rect x="1434" y="817" width="2" height="1" fill="#000"/><rect x="1436" y="816" width="1" height="1" fill="#000"/><rect x="1430" y="829" width="4" height="1" fill="#000"/><rect x="1430" y="846" width="4" height="1" fill="#000"/><rect x="1427" y="830" width="3" height="1" fill="#000"/><rect x="1427" y="845" width="3" height="1" fill="#000"/><rect x="1434" y="830" width="3" height="1" fill="#000"/><rect x="1434" y="845" width="3" height="1" fill="#000"/><rect x="1426" y="831" width="1" height="1" fill="#000"/><rect x="1426" y="844" width="1" height="1" fill="#000"/><rect x="1437" y="831" width="1" height="1" fill="#000"/><rect x="1437" y="844" width="1" height="1" fill="#000"/><rect x="1425" y="832" width="1" height="1" fill="#000"/><rect x="1425" y="843" width="1" height="1" fill="#000"/><rect x="1438" y="832" width="1" height="1" fill="#000"/><rect x="1438" y="843" width="1" height="1" fill="#000"/><rect x="1424" y="833" width="1" height="1" fill="#000"/><rect x="1424" y="842" width="1" height="1" fill="#000"/><rect x="1439" y="833" width="1" height="1" fill="#000"/><rect x="1439" y="842" width="1" height="1" fill="#000"/><rect x="1424" y="834" width="1" height="1" fill="#000"/><rect x="1424" y="841" width="1" height="1" fill="#000"/><rect x="1439" y="834" width="1" height="1" fill="#000"/><rect x="1439" y="841" width="1" height="1" fill="#000"/><rect x="1424" y="835" width="1" height="1" fill="#000"/><rect x="1424" y="840" width="1" height="1" fill="#000"/><rect x="1439" y="835" width="1" height="1" fill="#000"/><rect x="1439" y="840" width="1" height="1" fill="#000"/><rect x="1423" y="836" width="1" height="1" fill="#000"/><rect x="1423" y="839" width="1" height="1" fill="#000"/><rect x="1440" y="836" width="1" height="1" fill="#000"/><rect x="1440" y="839" width="1" height="1" fill="#000"/><rect x="1423" y="837" width="1" height="1" fill="#000"/><rect x="1423" y="838" width="1" height="1" fill="#000"/><rect x="1440" y="837" width="1" height="1" fill="#000"/><rect x="1440" y="838" width="1" height="1" fill="#000"/><rect x="1423" y="838" width="1" height="1" fill="#000"/><rect x="1423" y="837" width="1" height="1" fill="#000"/><rect x="1440" y="838" width="1" height="1" fill="#000"/><rect x="1440" y="837" width="1" height="1" fill="#000"/><rect x="1423" y="839" width="1" height="1" fill="#000"/><rect x="1423" y="836" width="1" height="1" fill="#000"/><rect x="1440" y="839" width="1" height="1" fill="#000"/><rect x="1440" y="836" width="1" height="1" fill="#000"/><rect x="1427" y="833" width="1" height="1" fill="#000"/><rect x="1432" y="839" width="1" height="1" fill="#000"/><rect x="1428" y="834" width="1" height="1" fill="#000"/><rect x="1433" y="840" width="1" height="1" fill="#000"/><rect x="1429" y="835" width="1" height="1" fill="#000"/><rect x="1434" y="841" width="1" height="1" fill="#000"/><rect x="1430" y="836" width="1" height="1" fill="#000"/><rect x="1435" y="842" width="1" height="1" fill="#000"/><rect x="1431" y="837" width="1" height="1" fill="#000"/><rect x="1436" y="843" width="1" height="1" fill="#000"/><rect x="1432" y="838" width="1" height="1" fill="#000"/><rect x="1437" y="844" width="1" height="1" fill="#000"/><rect x="1438" y="832" width="1" height="1" fill="#000"/><rect x="1437" y="833" width="1" height="1" fill="#000"/><rect x="1436" y="834" width="1" height="1" fill="#000"/><rect x="1435" y="835" width="1" height="1" fill="#000"/><rect x="1434" y="836" width="1" height="1" fill="#000"/><rect x="1433" y="837" width="1" height="1" fill="#000"/><rect x="1432" y="838" width="1" height="1" fill="#000"/><rect x="1432" y="839" width="1" height="1" fill="#000"/><rect x="1431" y="840" width="1" height="1" fill="#000"/><rect x="1430" y="841" width="1" height="1" fill="#000"/><rect x="1429" y="842" width="1" height="1" fill="#000"/><rect x="1428" y="843" width="1" height="1" fill="#000"/><rect x="1427" y="844" width="1" height="1" fill="#000"/><rect x="1489" y="706" width="1" height="20" fill="#000"/><rect x="1489" y="722" width="1" height="4" fill="#000"/><rect x="1488" y="724" width="1" height="1" fill="#000"/><rect x="1488" y="726" width="1" height="1" fill="#000"/><rect x="1486" y="725" width="1" height="2" fill="#000"/><rect x="1487" y="727" width="1" height="3" fill="#000"/><rect x="1488" y="730" width="1" height="3" fill="#000"/><rect x="1489" y="733" width="1" height="97" fill="#000"/><rect x="1485" y="814" width="2" height="1" fill="#000"/><rect x="1487" y="813" width="2" height="1" fill="#000"/><rect x="1489" y="812" width="2" height="1" fill="#000"/><rect x="1491" y="811" width="2" height="1" fill="#000"/><rect x="1493" y="810" width="1" height="1" fill="#000"/><rect x="1485" y="817" width="2" height="1" fill="#000"/><rect x="1487" y="816" width="2" height="1" fill="#000"/><rect x="1489" y="815" width="2" height="1" fill="#000"/><rect x="1491" y="814" width="2" height="1" fill="#000"/><rect x="1493" y="813" width="1" height="1" fill="#000"/><rect x="1485" y="820" width="2" height="1" fill="#000"/><rect x="1487" y="819" width="2" height="1" fill="#000"/><rect x="1489" y="818" width="2" height="1" fill="#000"/><rect x="1491" y="817" width="2" height="1" fill="#000"/><rect x="1493" y="816" width="1" height="1" fill="#000"/><rect x="1487" y="829" width="4" height="1" fill="#000"/><rect x="1487" y="846" width="4" height="1" fill="#000"/><rect x="1484" y="830" width="3" height="1" fill="#000"/><rect x="1484" y="845" width="3" height="1" fill="#000"/><rect x="1491" y="830" width="3" height="1" fill="#000"/><rect x="1491" y="845" width="3" height="1" fill="#000"/><rect x="1483" y="831" width="1" height="1" fill="#000"/><rect x="1483" y="844" width="1" height="1" fill="#000"/><rect x="1494" y="831" width="1" height="1" fill="#000"/><rect x="1494" y="844" width="1" height="1" fill="#000"/><rect x="1482" y="832" width="1" height="1" fill="#000"/><rect x="1482" y="843" width="1" height="1" fill="#000"/><rect x="1495" y="832" width="1" height="1" fill="#000"/><rect x="1495" y="843" width="1" height="1" fill="#000"/><rect x="1481" y="833" width="1" height="1" fill="#000"/><rect x="1481" y="842" width="1" height="1" fill="#000"/><rect x="1496" y="833" width="1" height="1" fill="#000"/><rect x="1496" y="842" width="1" height="1" fill="#000"/><rect x="1481" y="834" width="1" height="1" fill="#000"/><rect x="1481" y="841" width="1" height="1" fill="#000"/><rect x="1496" y="834" width="1" height="1" fill="#000"/><rect x="1496" y="841" width="1" height="1" fill="#000"/><rect x="1481" y="835" width="1" height="1" fill="#000"/><rect x="1481" y="840" width="1" height="1" fill="#000"/><rect x="1496" y="835" width="1" height="1" fill="#000"/><rect x="1496" y="840" width="1" height="1" fill="#000"/><rect x="1480" y="836" width="1" height="1" fill="#000"/><rect x="1480" y="839" width="1" height="1" fill="#000"/><rect x="1497" y="836" width="1" height="1" fill="#000"/><rect x="1497" y="839" width="1" height="1" fill="#000"/><rect x="1480" y="837" width="1" height="1" fill="#000"/><rect x="1480" y="838" width="1" height="1" fill="#000"/><rect x="1497" y="837" width="1" height="1" fill="#000"/><rect x="1497" y="838" width="1" height="1" fill="#000"/><rect x="1480" y="838" width="1" height="1" fill="#000"/><rect x="1480" y="837" width="1" height="1" fill="#000"/><rect x="1497" y="838" width="1" height="1" fill="#000"/><rect x="1497" y="837" width="1" height="1" fill="#000"/><rect x="1480" y="839" width="1" height="1" fill="#000"/><rect x="1480" y="836" width="1" height="1" fill="#000"/><rect x="1497" y="839" width="1" height="1" fill="#000"/><rect x="1497" y="836" width="1" height="1" fill="#000"/><rect x="1620" y="706" width="1" height="20" fill="#000"/><rect x="1620" y="722" width="1" height="4" fill="#000"/><rect x="1619" y="724" width="1" height="1" fill="#000"/><rect x="1619" y="726" width="1" height="1" fill="#000"/><rect x="1617" y="725" width="1" height="2" fill="#000"/><rect x="1618" y="727" width="1" height="3" fill="#000"/><rect x="1619" y="730" width="1" height="3" fill="#000"/><rect x="1620" y="733" width="1" height="101" fill="#000"/><rect x="1616" y="817" width="2" height="1" fill="#000"/><rect x="1618" y="816" width="2" height="1" fill="#000"/><rect x="1620" y="815" width="2" height="1" fill="#000"/><rect x="1622" y="814" width="2" height="1" fill="#000"/><rect x="1624" y="813" width="1" height="1" fill="#000"/><rect x="1616" y="820" width="2" height="1" fill="#000"/><rect x="1618" y="819" width="2" height="1" fill="#000"/><rect x="1620" y="818" width="2" height="1" fill="#000"/><rect x="1622" y="817" width="2" height="1" fill="#000"/><rect x="1624" y="816" width="1" height="1" fill="#000"/><rect x="1616" y="823" width="2" height="1" fill="#000"/><rect x="1618" y="822" width="2" height="1" fill="#000"/><rect x="1620" y="821" width="2" height="1" fill="#000"/><rect x="1622" y="820" width="2" height="1" fill="#000"/><rect x="1624" y="819" width="1" height="1" fill="#000"/><rect x="1616" y="826" width="2" height="1" fill="#000"/><rect x="1618" y="825" width="2" height="1" fill="#000"/><rect x="1620" y="824" width="2" height="1" fill="#000"/><rect x="1622" y="823" width="2" height="1" fill="#000"/><rect x="1624" y="822" width="1" height="1" fill="#000"/><rect x="1617" y="835" width="1" height="2" fill="#000"/><rect x="1618" y="837" width="1" height="3" fill="#000"/><rect x="1619" y="840" width="1" height="3" fill="#000"/><rect x="1620" y="843" width="1" height="5" fill="#000"/><rect x="1545" y="847" width="152" height="1" fill="#000"/><rect x="1545" y="847" width="1" height="21" fill="#000"/><rect x="1545" y="864" width="1" height="4" fill="#000"/><rect x="1544" y="866" width="1" height="1" fill="#000"/><rect x="1544" y="868" width="1" height="1" fill="#000"/><rect x="1542" y="867" width="1" height="2" fill="#000"/><rect x="1543" y="869" width="1" height="3" fill="#000"/><rect x="1544" y="872" width="1" height="3" fill="#000"/><rect x="1545" y="875" width="1" height="105" fill="#000"/><rect x="1541" y="964" width="2" height="1" fill="#000"/><rect x="1543" y="963" width="2" height="1" fill="#000"/><rect x="1545" y="962" width="2" height="1" fill="#000"/><rect x="1547" y="961" width="2" height="1" fill="#000"/><rect x="1549" y="960" width="1" height="1" fill="#000"/><rect x="1541" y="967" width="2" height="1" fill="#000"/><rect x="1543" y="966" width="2" height="1" fill="#000"/><rect x="1545" y="965" width="2" height="1" fill="#000"/><rect x="1547" y="964" width="2" height="1" fill="#000"/><rect x="1549" y="963" width="1" height="1" fill="#000"/><rect x="1541" y="970" width="2" height="1" fill="#000"/><rect x="1543" y="969" width="2" height="1" fill="#000"/><rect x="1545" y="968" width="2" height="1" fill="#000"/><rect x="1547" y="967" width="2" height="1" fill="#000"/><rect x="1549" y="966" width="1" height="1" fill="#000"/><rect x="1541" y="979" width="8" height="1" fill="#000"/><rect x="1541" y="996" width="8" height="1" fill="#000"/><rect x="1538" y="980" width="3" height="1" fill="#000"/><rect x="1538" y="995" width="3" height="1" fill="#000"/><rect x="1549" y="980" width="3" height="1" fill="#000"/><rect x="1549" y="995" width="3" height="1" fill="#000"/><rect x="1535" y="981" width="3" height="1" fill="#000"/><rect x="1535" y="994" width="3" height="1" fill="#000"/><rect x="1552" y="981" width="3" height="1" fill="#000"/><rect x="1552" y="994" width="3" height="1" fill="#000"/><rect x="1534" y="982" width="1" height="1" fill="#000"/><rect x="1534" y="993" width="1" height="1" fill="#000"/><rect x="1555" y="982" width="1" height="1" fill="#000"/><rect x="1555" y="993" width="1" height="1" fill="#000"/><rect x="1533" y="983" width="1" height="1" fill="#000"/><rect x="1533" y="992" width="1" height="1" fill="#000"/><rect x="1556" y="983" width="1" height="1" fill="#000"/><rect x="1556" y="992" width="1" height="1" fill="#000"/><rect x="1532" y="984" width="1" height="1" fill="#000"/><rect x="1532" y="991" width="1" height="1" fill="#000"/><rect x="1557" y="984" width="1" height="1" fill="#000"/><rect x="1557" y="991" width="1" height="1" fill="#000"/><rect x="1532" y="985" width="1" height="1" fill="#000"/><rect x="1532" y="990" width="1" height="1" fill="#000"/><rect x="1557" y="985" width="1" height="1" fill="#000"/><rect x="1557" y="990" width="1" height="1" fill="#000"/><rect x="1531" y="986" width="1" height="1" fill="#000"/><rect x="1531" y="989" width="1" height="1" fill="#000"/><rect x="1558" y="986" width="1" height="1" fill="#000"/><rect x="1558" y="989" width="1" height="1" fill="#000"/><rect x="1531" y="987" width="1" height="1" fill="#000"/><rect x="1531" y="988" width="1" height="1" fill="#000"/><rect x="1558" y="987" width="1" height="1" fill="#000"/><rect x="1558" y="988" width="1" height="1" fill="#000"/><rect x="1539" y="986" width="2" height="1" fill="#000"/><rect x="1539" y="989" width="2" height="1" fill="#000"/><rect x="1538" y="987" width="1" height="2" fill="#000"/><rect x="1541" y="987" width="1" height="2" fill="#000"/><rect x="1550" y="986" width="2" height="1" fill="#000"/><rect x="1550" y="989" width="2" height="1" fill="#000"/><rect x="1549" y="987" width="1" height="2" fill="#000"/><rect x="1552" y="987" width="1" height="2" fill="#000"/><rect x="1620" y="847" width="1" height="21" fill="#000"/><rect x="1620" y="864" width="1" height="4" fill="#000"/><rect x="1619" y="866" width="1" height="1" fill="#000"/><rect x="1619" y="868" width="1" height="1" fill="#000"/><rect x="1617" y="867" width="1" height="2" fill="#000"/><rect x="1618" y="869" width="1" height="3" fill="#000"/><rect x="1619" y="872" width="1" height="3" fill="#000"/><rect x="1620" y="875" width="1" height="105" fill="#000"/><rect x="1616" y="964" width="2" height="1" fill="#000"/><rect x="1618" y="963" width="2" height="1" fill="#000"/><rect x="1620" y="962" width="2" height="1" fill="#000"/><rect x="1622" y="961" width="2" height="1" fill="#000"/><rect x="1624" y="960" width="1" height="1" fill="#000"/><rect x="1616" y="967" width="2" height="1" fill="#000"/><rect x="1618" y="966" width="2" height="1" fill="#000"/><rect x="1620" y="965" width="2" height="1" fill="#000"/><rect x="1622" y="964" width="2" height="1" fill="#000"/><rect x="1624" y="963" width="1" height="1" fill="#000"/><rect x="1616" y="970" width="2" height="1" fill="#000"/><rect x="1618" y="969" width="2" height="1" fill="#000"/><rect x="1620" y="968" width="2" height="1" fill="#000"/><rect x="1622" y="967" width="2" height="1" fill="#000"/><rect x="1624" y="966" width="1" height="1" fill="#000"/><rect x="1616" y="979" width="8" height="1" fill="#000"/><rect x="1616" y="996" width="8" height="1" fill="#000"/><rect x="1613" y="980" width="3" height="1" fill="#000"/><rect x="1613" y="995" width="3" height="1" fill="#000"/><rect x="1624" y="980" width="3" height="1" fill="#000"/><rect x="1624" y="995" width="3" height="1" fill="#000"/><rect x="1610" y="981" width="3" height="1" fill="#000"/><rect x="1610" y="994" width="3" height="1" fill="#000"/><rect x="1627" y="981" width="3" height="1" fill="#000"/><rect x="1627" y="994" width="3" height="1" fill="#000"/><rect x="1609" y="982" width="1" height="1" fill="#000"/><rect x="1609" y="993" width="1" height="1" fill="#000"/><rect x="1630" y="982" width="1" height="1" fill="#000"/><rect x="1630" y="993" width="1" height="1" fill="#000"/><rect x="1608" y="983" width="1" height="1" fill="#000"/><rect x="1608" y="992" width="1" height="1" fill="#000"/><rect x="1631" y="983" width="1" height="1" fill="#000"/><rect x="1631" y="992" width="1" height="1" fill="#000"/><rect x="1607" y="984" width="1" height="1" fill="#000"/><rect x="1607" y="991" width="1" height="1" fill="#000"/><rect x="1632" y="984" width="1" height="1" fill="#000"/><rect x="1632" y="991" width="1" height="1" fill="#000"/><rect x="1607" y="985" width="1" height="1" fill="#000"/><rect x="1607" y="990" width="1" height="1" fill="#000"/><rect x="1632" y="985" width="1" height="1" fill="#000"/><rect x="1632" y="990" width="1" height="1" fill="#000"/><rect x="1606" y="986" width="1" height="1" fill="#000"/><rect x="1606" y="989" width="1" height="1" fill="#000"/><rect x="1633" y="986" width="1" height="1" fill="#000"/><rect x="1633" y="989" width="1" height="1" fill="#000"/><rect x="1606" y="987" width="1" height="1" fill="#000"/><rect x="1606" y="988" width="1" height="1" fill="#000"/><rect x="1633" y="987" width="1" height="1" fill="#000"/><rect x="1633" y="988" width="1" height="1" fill="#000"/><rect x="1614" y="986" width="2" height="1" fill="#000"/><rect x="1614" y="989" width="2" height="1" fill="#000"/><rect x="1613" y="987" width="1" height="2" fill="#000"/><rect x="1616" y="987" width="1" height="2" fill="#000"/><rect x="1625" y="986" width="2" height="1" fill="#000"/><rect x="1625" y="989" width="2" height="1" fill="#000"/><rect x="1624" y="987" width="1" height="2" fill="#000"/><rect x="1627" y="987" width="1" height="2" fill="#000"/><rect x="1696" y="847" width="1" height="21" fill="#000"/><rect x="1696" y="864" width="1" height="4" fill="#000"/><rect x="1695" y="866" width="1" height="1" fill="#000"/><rect x="1695" y="868" width="1" height="1" fill="#000"/><rect x="1693" y="867" width="1" height="2" fill="#000"/><rect x="1694" y="869" width="1" height="3" fill="#000"/><rect x="1695" y="872" width="1" height="3" fill="#000"/><rect x="1696" y="875" width="1" height="105" fill="#000"/><rect x="1692" y="964" width="2" height="1" fill="#000"/><rect x="1694" y="963" width="2" height="1" fill="#000"/><rect x="1696" y="962" width="2" height="1" fill="#000"/><rect x="1698" y="961" width="2" height="1" fill="#000"/><rect x="1700" y="960" width="1" height="1" fill="#000"/><rect x="1692" y="967" width="2" height="1" fill="#000"/><rect x="1694" y="966" width="2" height="1" fill="#000"/><rect x="1696" y="965" width="2" height="1" fill="#000"/><rect x="1698" y="964" width="2" height="1" fill="#000"/><rect x="1700" y="963" width="1" height="1" fill="#000"/><rect x="1692" y="970" width="2" height="1" fill="#000"/><rect x="1694" y="969" width="2" height="1" fill="#000"/><rect x="1696" y="968" width="2" height="1" fill="#000"/><rect x="1698" y="967" width="2" height="1" fill="#000"/><rect x="1700" y="966" width="1" height="1" fill="#000"/><rect x="1692" y="979" width="8" height="1" fill="#000"/><rect x="1692" y="996" width="8" height="1" fill="#000"/><rect x="1689" y="980" width="3" height="1" fill="#000"/><rect x="1689" y="995" width="3" height="1" fill="#000"/><rect x="1700" y="980" width="3" height="1" fill="#000"/><rect x="1700" y="995" width="3" height="1" fill="#000"/><rect x="1686" y="981" width="3" height="1" fill="#000"/><rect x="1686" y="994" width="3" height="1" fill="#000"/><rect x="1703" y="981" width="3" height="1" fill="#000"/><rect x="1703" y="994" width="3" height="1" fill="#000"/><rect x="1685" y="982" width="1" height="1" fill="#000"/><rect x="1685" y="993" width="1" height="1" fill="#000"/><rect x="1706" y="982" width="1" height="1" fill="#000"/><rect x="1706" y="993" width="1" height="1" fill="#000"/><rect x="1684" y="983" width="1" height="1" fill="#000"/><rect x="1684" y="992" width="1" height="1" fill="#000"/><rect x="1707" y="983" width="1" height="1" fill="#000"/><rect x="1707" y="992" width="1" height="1" fill="#000"/><rect x="1683" y="984" width="1" height="1" fill="#000"/><rect x="1683" y="991" width="1" height="1" fill="#000"/><rect x="1708" y="984" width="1" height="1" fill="#000"/><rect x="1708" y="991" width="1" height="1" fill="#000"/><rect x="1683" y="985" width="1" height="1" fill="#000"/><rect x="1683" y="990" width="1" height="1" fill="#000"/><rect x="1708" y="985" width="1" height="1" fill="#000"/><rect x="1708" y="990" width="1" height="1" fill="#000"/><rect x="1682" y="986" width="1" height="1" fill="#000"/><rect x="1682" y="989" width="1" height="1" fill="#000"/><rect x="1709" y="986" width="1" height="1" fill="#000"/><rect x="1709" y="989" width="1" height="1" fill="#000"/><rect x="1682" y="987" width="1" height="1" fill="#000"/><rect x="1682" y="988" width="1" height="1" fill="#000"/><rect x="1709" y="987" width="1" height="1" fill="#000"/><rect x="1709" y="988" width="1" height="1" fill="#000"/><rect x="1690" y="986" width="2" height="1" fill="#000"/><rect x="1690" y="989" width="2" height="1" fill="#000"/><rect x="1689" y="987" width="1" height="2" fill="#000"/><rect x="1692" y="987" width="1" height="2" fill="#000"/><rect x="1701" y="986" width="2" height="1" fill="#000"/><rect x="1701" y="989" width="2" height="1" fill="#000"/><rect x="1700" y="987" width="1" height="2" fill="#000"/><rect x="1703" y="987" width="1" height="2" fill="#000"/><rect x="738" y="517" width="354" height="1" fill="#000"/><rect x="743" y="517" width="1" height="29" fill="#000"/><rect x="743" y="542" width="1" height="4" fill="#000"/><rect x="742" y="544" width="1" height="1" fill="#000"/><rect x="742" y="546" width="1" height="1" fill="#000"/><rect x="740" y="545" width="1" height="2" fill="#000"/><rect x="741" y="547" width="1" height="3" fill="#000"/><rect x="742" y="550" width="1" height="3" fill="#000"/><rect x="743" y="553" width="1" height="29" fill="#000"/><rect x="936" y="517" width="1" height="20" fill="#000"/><rect x="936" y="533" width="1" height="4" fill="#000"/><rect x="935" y="535" width="1" height="1" fill="#000"/><rect x="935" y="537" width="1" height="1" fill="#000"/><rect x="933" y="536" width="1" height="2" fill="#000"/><rect x="934" y="538" width="1" height="3" fill="#000"/><rect x="935" y="541" width="1" height="3" fill="#000"/><rect x="936" y="544" width="1" height="114" fill="#000"/><rect x="1011" y="517" width="1" height="20" fill="#000"/><rect x="1011" y="533" width="1" height="4" fill="#000"/><rect x="1010" y="535" width="1" height="1" fill="#000"/><rect x="1010" y="537" width="1" height="1" fill="#000"/><rect x="1008" y="536" width="1" height="2" fill="#000"/><rect x="1009" y="538" width="1" height="3" fill="#000"/><rect x="1010" y="541" width="1" height="3" fill="#000"/><rect x="1011" y="544" width="1" height="105" fill="#000"/><rect x="1086" y="517" width="1" height="20" fill="#000"/><rect x="1086" y="533" width="1" height="4" fill="#000"/><rect x="1085" y="535" width="1" height="1" fill="#000"/><rect x="1085" y="537" width="1" height="1" fill="#000"/><rect x="1083" y="536" width="1" height="2" fill="#000"/><rect x="1084" y="538" width="1" height="3" fill="#000"/><rect x="1085" y="541" width="1" height="3" fill="#000"/><rect x="1086" y="544" width="1" height="101" fill="#000"/><rect x="932" y="635" width="2" height="1" fill="#000"/><rect x="934" y="634" width="2" height="1" fill="#000"/><rect x="936" y="633" width="2" height="1" fill="#000"/><rect x="938" y="632" width="2" height="1" fill="#000"/><rect x="940" y="631" width="1" height="1" fill="#000"/><rect x="932" y="638" width="2" height="1" fill="#000"/><rect x="934" y="637" width="2" height="1" fill="#000"/><rect x="936" y="636" width="2" height="1" fill="#000"/><rect x="938" y="635" width="2" height="1" fill="#000"/><rect x="940" y="634" width="1" height="1" fill="#000"/><rect x="927" y="657" width="18" height="1" fill="#000"/><rect x="931" y="658" width="3" height="1" fill="#000"/><rect x="938" y="658" width="3" height="1" fill="#000"/><rect x="930" y="659" width="1" height="1" fill="#000"/><rect x="941" y="659" width="1" height="1" fill="#000"/><rect x="929" y="660" width="1" height="1" fill="#000"/><rect x="942" y="660" width="1" height="1" fill="#000"/><rect x="928" y="661" width="1" height="3" fill="#000"/><rect x="943" y="661" width="1" height="3" fill="#000"/><rect x="927" y="664" width="1" height="2" fill="#000"/><rect x="944" y="664" width="1" height="2" fill="#000"/><rect x="1007" y="635" width="2" height="1" fill="#000"/><rect x="1009" y="634" width="2" height="1" fill="#000"/><rect x="1011" y="633" width="2" height="1" fill="#000"/><rect x="1013" y="632" width="2" height="1" fill="#000"/><rect x="1015" y="631" width="1" height="1" fill="#000"/><rect x="1007" y="638" width="2" height="1" fill="#000"/><rect x="1009" y="637" width="2" height="1" fill="#000"/><rect x="1011" y="636" width="2" height="1" fill="#000"/><rect x="1013" y="635" width="2" height="1" fill="#000"/><rect x="1015" y="634" width="1" height="1" fill="#000"/><rect x="1009" y="648" width="4" height="1" fill="#000"/><rect x="1009" y="665" width="4" height="1" fill="#000"/><rect x="1006" y="649" width="3" height="1" fill="#000"/><rect x="1006" y="664" width="3" height="1" fill="#000"/><rect x="1013" y="649" width="3" height="1" fill="#000"/><rect x="1013" y="664" width="3" height="1" fill="#000"/><rect x="1005" y="650" width="1" height="1" fill="#000"/><rect x="1005" y="663" width="1" height="1" fill="#000"/><rect x="1016" y="650" width="1" height="1" fill="#000"/><rect x="1016" y="663" width="1" height="1" fill="#000"/><rect x="1004" y="651" width="1" height="1" fill="#000"/><rect x="1004" y="662" width="1" height="1" fill="#000"/><rect x="1017" y="651" width="1" height="1" fill="#000"/><rect x="1017" y="662" width="1" height="1" fill="#000"/><rect x="1003" y="652" width="1" height="1" fill="#000"/><rect x="1003" y="661" width="1" height="1" fill="#000"/><rect x="1018" y="652" width="1" height="1" fill="#000"/><rect x="1018" y="661" width="1" height="1" fill="#000"/><rect x="1003" y="653" width="1" height="1" fill="#000"/><rect x="1003" y="660" width="1" height="1" fill="#000"/><rect x="1018" y="653" width="1" height="1" fill="#000"/><rect x="1018" y="660" width="1" height="1" fill="#000"/><rect x="1003" y="654" width="1" height="1" fill="#000"/><rect x="1003" y="659" width="1" height="1" fill="#000"/><rect x="1018" y="654" width="1" height="1" fill="#000"/><rect x="1018" y="659" width="1" height="1" fill="#000"/><rect x="1002" y="655" width="1" height="1" fill="#000"/><rect x="1002" y="658" width="1" height="1" fill="#000"/><rect x="1019" y="655" width="1" height="1" fill="#000"/><rect x="1019" y="658" width="1" height="1" fill="#000"/><rect x="1002" y="656" width="1" height="1" fill="#000"/><rect x="1002" y="657" width="1" height="1" fill="#000"/><rect x="1019" y="656" width="1" height="1" fill="#000"/><rect x="1019" y="657" width="1" height="1" fill="#000"/><rect x="1002" y="657" width="1" height="1" fill="#000"/><rect x="1002" y="656" width="1" height="1" fill="#000"/><rect x="1019" y="657" width="1" height="1" fill="#000"/><rect x="1019" y="656" width="1" height="1" fill="#000"/><rect x="1002" y="658" width="1" height="1" fill="#000"/><rect x="1002" y="655" width="1" height="1" fill="#000"/><rect x="1019" y="658" width="1" height="1" fill="#000"/><rect x="1019" y="655" width="1" height="1" fill="#000"/><rect x="1082" y="631" width="2" height="1" fill="#000"/><rect x="1084" y="630" width="2" height="1" fill="#000"/><rect x="1086" y="629" width="2" height="1" fill="#000"/><rect x="1088" y="628" width="2" height="1" fill="#000"/><rect x="1090" y="627" width="1" height="1" fill="#000"/><rect x="1082" y="634" width="2" height="1" fill="#000"/><rect x="1084" y="633" width="2" height="1" fill="#000"/><rect x="1086" y="632" width="2" height="1" fill="#000"/><rect x="1088" y="631" width="2" height="1" fill="#000"/><rect x="1090" y="630" width="1" height="1" fill="#000"/><rect x="1082" y="637" width="2" height="1" fill="#000"/><rect x="1084" y="636" width="2" height="1" fill="#000"/><rect x="1086" y="635" width="2" height="1" fill="#000"/><rect x="1088" y="634" width="2" height="1" fill="#000"/><rect x="1090" y="633" width="1" height="1" fill="#000"/><rect x="1085" y="645" width="1" height="1" fill="#000"/><rect x="1084" y="646" width="1" height="1" fill="#000"/><rect x="1084" y="647" width="1" height="1" fill="#000"/><rect x="1083" y="648" width="1" height="1" fill="#000"/><rect x="1083" y="649" width="1" height="1" fill="#000"/><rect x="1082" y="650" width="1" height="1" fill="#000"/><rect x="1082" y="651" width="1" height="1" fill="#000"/><rect x="1081" y="652" width="1" height="1" fill="#000"/><rect x="1080" y="653" width="1" height="1" fill="#000"/><rect x="1080" y="654" width="1" height="1" fill="#000"/><rect x="1079" y="655" width="1" height="1" fill="#000"/><rect x="1079" y="656" width="1" height="1" fill="#000"/><rect x="1078" y="657" width="1" height="1" fill="#000"/><rect x="1078" y="658" width="1" height="1" fill="#000"/><rect x="1077" y="659" width="1" height="1" fill="#000"/><rect x="1077" y="660" width="1" height="1" fill="#000"/><rect x="1076" y="661" width="1" height="1" fill="#000"/><rect x="1087" y="645" width="1" height="1" fill="#000"/><rect x="1088" y="646" width="1" height="1" fill="#000"/><rect x="1088" y="647" width="1" height="1" fill="#000"/><rect x="1089" y="648" width="1" height="1" fill="#000"/><rect x="1089" y="649" width="1" height="1" fill="#000"/><rect x="1090" y="650" width="1" height="1" fill="#000"/><rect x="1090" y="651" width="1" height="1" fill="#000"/><rect x="1091" y="652" width="1" height="1" fill="#000"/><rect x="1091" y="653" width="1" height="1" fill="#000"/><rect x="1092" y="654" width="1" height="1" fill="#000"/><rect x="1092" y="655" width="1" height="1" fill="#000"/><rect x="1093" y="656" width="1" height="1" fill="#000"/><rect x="1093" y="657" width="1" height="1" fill="#000"/><rect x="1094" y="658" width="1" height="1" fill="#000"/><rect x="1094" y="659" width="1" height="1" fill="#000"/><rect x="1095" y="660" width="1" height="1" fill="#000"/><rect x="1095" y="661" width="1" height="1" fill="#000"/><rect x="1076" y="661" width="10" height="1" fill="#000"/><rect x="1087" y="661" width="9" height="1" fill="#000"/><rect x="1085" y="658" width="1" height="5" fill="#000"/><rect x="1087" y="658" width="1" height="5" fill="#000"/><rect x="1080" y="650" width="1" height="1" fill="#000"/><rect x="1081" y="651" width="3" height="2" fill="#000"/><rect x="1079" y="652" width="1" height="1" fill="#000"/><rect x="1080" y="653" width="1" height="3" fill="#000"/><rect x="1082" y="654" width="1" height="1" fill="#000"/><rect x="1091" y="651" width="2" height="1" fill="#000"/><rect x="1092" y="652" width="1" height="1" fill="#000"/><rect x="1089" y="653" width="3" height="1" fill="#000"/><rect x="1089" y="654" width="1" height="1" fill="#000"/><rect x="626" y="581" width="235" height="1" fill="#000"/><rect x="630" y="581" width="1" height="68" fill="#000"/><rect x="626" y="635" width="2" height="1" fill="#000"/><rect x="628" y="634" width="2" height="1" fill="#000"/><rect x="630" y="633" width="2" height="1" fill="#000"/><rect x="632" y="632" width="2" height="1" fill="#000"/><rect x="634" y="631" width="1" height="1" fill="#000"/><rect x="626" y="638" width="2" height="1" fill="#000"/><rect x="628" y="637" width="2" height="1" fill="#000"/><rect x="630" y="636" width="2" height="1" fill="#000"/><rect x="632" y="635" width="2" height="1" fill="#000"/><rect x="634" y="634" width="1" height="1" fill="#000"/><rect x="706" y="581" width="1" height="68" fill="#000"/><rect x="702" y="635" width="2" height="1" fill="#000"/><rect x="704" y="634" width="2" height="1" fill="#000"/><rect x="706" y="633" width="2" height="1" fill="#000"/><rect x="708" y="632" width="2" height="1" fill="#000"/><rect x="710" y="631" width="1" height="1" fill="#000"/><rect x="702" y="638" width="2" height="1" fill="#000"/><rect x="704" y="637" width="2" height="1" fill="#000"/><rect x="706" y="636" width="2" height="1" fill="#000"/><rect x="708" y="635" width="2" height="1" fill="#000"/><rect x="710" y="634" width="1" height="1" fill="#000"/><rect x="781" y="581" width="1" height="68" fill="#000"/><rect x="777" y="635" width="2" height="1" fill="#000"/><rect x="779" y="634" width="2" height="1" fill="#000"/><rect x="781" y="633" width="2" height="1" fill="#000"/><rect x="783" y="632" width="2" height="1" fill="#000"/><rect x="785" y="631" width="1" height="1" fill="#000"/><rect x="777" y="638" width="2" height="1" fill="#000"/><rect x="779" y="637" width="2" height="1" fill="#000"/><rect x="781" y="636" width="2" height="1" fill="#000"/><rect x="783" y="635" width="2" height="1" fill="#000"/><rect x="785" y="634" width="1" height="1" fill="#000"/><rect x="856" y="581" width="1" height="68" fill="#000"/><rect x="852" y="635" width="2" height="1" fill="#000"/><rect x="854" y="634" width="2" height="1" fill="#000"/><rect x="856" y="633" width="2" height="1" fill="#000"/><rect x="858" y="632" width="2" height="1" fill="#000"/><rect x="860" y="631" width="1" height="1" fill="#000"/><rect x="852" y="638" width="2" height="1" fill="#000"/><rect x="854" y="637" width="2" height="1" fill="#000"/><rect x="856" y="636" width="2" height="1" fill="#000"/><rect x="858" y="635" width="2" height="1" fill="#000"/><rect x="860" y="634" width="1" height="1" fill="#000"/><rect x="628" y="648" width="4" height="1" fill="#000"/><rect x="628" y="665" width="4" height="1" fill="#000"/><rect x="625" y="649" width="3" height="1" fill="#000"/><rect x="625" y="664" width="3" height="1" fill="#000"/><rect x="632" y="649" width="3" height="1" fill="#000"/><rect x="632" y="664" width="3" height="1" fill="#000"/><rect x="624" y="650" width="1" height="1" fill="#000"/><rect x="624" y="663" width="1" height="1" fill="#000"/><rect x="635" y="650" width="1" height="1" fill="#000"/><rect x="635" y="663" width="1" height="1" fill="#000"/><rect x="623" y="651" width="1" height="1" fill="#000"/><rect x="623" y="662" width="1" height="1" fill="#000"/><rect x="636" y="651" width="1" height="1" fill="#000"/><rect x="636" y="662" width="1" height="1" fill="#000"/><rect x="622" y="652" width="1" height="1" fill="#000"/><rect x="622" y="661" width="1" height="1" fill="#000"/><rect x="637" y="652" width="1" height="1" fill="#000"/><rect x="637" y="661" width="1" height="1" fill="#000"/><rect x="622" y="653" width="1" height="1" fill="#000"/><rect x="622" y="660" width="1" height="1" fill="#000"/><rect x="637" y="653" width="1" height="1" fill="#000"/><rect x="637" y="660" width="1" height="1" fill="#000"/><rect x="622" y="654" width="1" height="1" fill="#000"/><rect x="622" y="659" width="1" height="1" fill="#000"/><rect x="637" y="654" width="1" height="1" fill="#000"/><rect x="637" y="659" width="1" height="1" fill="#000"/><rect x="621" y="655" width="1" height="1" fill="#000"/><rect x="621" y="658" width="1" height="1" fill="#000"/><rect x="638" y="655" width="1" height="1" fill="#000"/><rect x="638" y="658" width="1" height="1" fill="#000"/><rect x="621" y="656" width="1" height="1" fill="#000"/><rect x="621" y="657" width="1" height="1" fill="#000"/><rect x="638" y="656" width="1" height="1" fill="#000"/><rect x="638" y="657" width="1" height="1" fill="#000"/><rect x="621" y="657" width="1" height="1" fill="#000"/><rect x="621" y="656" width="1" height="1" fill="#000"/><rect x="638" y="657" width="1" height="1" fill="#000"/><rect x="638" y="656" width="1" height="1" fill="#000"/><rect x="621" y="658" width="1" height="1" fill="#000"/><rect x="621" y="655" width="1" height="1" fill="#000"/><rect x="638" y="658" width="1" height="1" fill="#000"/><rect x="638" y="655" width="1" height="1" fill="#000"/><rect x="625" y="652" width="1" height="1" fill="#000"/><rect x="630" y="658" width="1" height="1" fill="#000"/><rect x="626" y="653" width="1" height="1" fill="#000"/><rect x="631" y="659" width="1" height="1" fill="#000"/><rect x="627" y="654" width="1" height="1" fill="#000"/><rect x="632" y="660" width="1" height="1" fill="#000"/><rect x="628" y="655" width="1" height="1" fill="#000"/><rect x="633" y="661" width="1" height="1" fill="#000"/><rect x="629" y="656" width="1" height="1" fill="#000"/><rect x="634" y="662" width="1" height="1" fill="#000"/><rect x="630" y="657" width="1" height="1" fill="#000"/><rect x="635" y="663" width="1" height="1" fill="#000"/><rect x="636" y="651" width="1" height="1" fill="#000"/><rect x="635" y="652" width="1" height="1" fill="#000"/><rect x="634" y="653" width="1" height="1" fill="#000"/><rect x="633" y="654" width="1" height="1" fill="#000"/><rect x="632" y="655" width="1" height="1" fill="#000"/><rect x="631" y="656" width="1" height="1" fill="#000"/><rect x="630" y="657" width="1" height="1" fill="#000"/><rect x="630" y="658" width="1" height="1" fill="#000"/><rect x="629" y="659" width="1" height="1" fill="#000"/><rect x="628" y="660" width="1" height="1" fill="#000"/><rect x="627" y="661" width="1" height="1" fill="#000"/><rect x="626" y="662" width="1" height="1" fill="#000"/><rect x="625" y="663" width="1" height="1" fill="#000"/><rect x="704" y="648" width="4" height="1" fill="#000"/><rect x="704" y="665" width="4" height="1" fill="#000"/><rect x="701" y="649" width="3" height="1" fill="#000"/><rect x="701" y="664" width="3" height="1" fill="#000"/><rect x="708" y="649" width="3" height="1" fill="#000"/><rect x="708" y="664" width="3" height="1" fill="#000"/><rect x="700" y="650" width="1" height="1" fill="#000"/><rect x="700" y="663" width="1" height="1" fill="#000"/><rect x="711" y="650" width="1" height="1" fill="#000"/><rect x="711" y="663" width="1" height="1" fill="#000"/><rect x="699" y="651" width="1" height="1" fill="#000"/><rect x="699" y="662" width="1" height="1" fill="#000"/><rect x="712" y="651" width="1" height="1" fill="#000"/><rect x="712" y="662" width="1" height="1" fill="#000"/><rect x="698" y="652" width="1" height="1" fill="#000"/><rect x="698" y="661" width="1" height="1" fill="#000"/><rect x="713" y="652" width="1" height="1" fill="#000"/><rect x="713" y="661" width="1" height="1" fill="#000"/><rect x="698" y="653" width="1" height="1" fill="#000"/><rect x="698" y="660" width="1" height="1" fill="#000"/><rect x="713" y="653" width="1" height="1" fill="#000"/><rect x="713" y="660" width="1" height="1" fill="#000"/><rect x="698" y="654" width="1" height="1" fill="#000"/><rect x="698" y="659" width="1" height="1" fill="#000"/><rect x="713" y="654" width="1" height="1" fill="#000"/><rect x="713" y="659" width="1" height="1" fill="#000"/><rect x="697" y="655" width="1" height="1" fill="#000"/><rect x="697" y="658" width="1" height="1" fill="#000"/><rect x="714" y="655" width="1" height="1" fill="#000"/><rect x="714" y="658" width="1" height="1" fill="#000"/><rect x="697" y="656" width="1" height="1" fill="#000"/><rect x="697" y="657" width="1" height="1" fill="#000"/><rect x="714" y="656" width="1" height="1" fill="#000"/><rect x="714" y="657" width="1" height="1" fill="#000"/><rect x="697" y="657" width="1" height="1" fill="#000"/><rect x="697" y="656" width="1" height="1" fill="#000"/><rect x="714" y="657" width="1" height="1" fill="#000"/><rect x="714" y="656" width="1" height="1" fill="#000"/><rect x="697" y="658" width="1" height="1" fill="#000"/><rect x="697" y="655" width="1" height="1" fill="#000"/><rect x="714" y="658" width="1" height="1" fill="#000"/><rect x="714" y="655" width="1" height="1" fill="#000"/><rect x="701" y="652" width="1" height="1" fill="#000"/><rect x="706" y="658" width="1" height="1" fill="#000"/><rect x="702" y="653" width="1" height="1" fill="#000"/><rect x="707" y="659" width="1" height="1" fill="#000"/><rect x="703" y="654" width="1" height="1" fill="#000"/><rect x="708" y="660" width="1" height="1" fill="#000"/><rect x="704" y="655" width="1" height="1" fill="#000"/><rect x="709" y="661" width="1" height="1" fill="#000"/><rect x="705" y="656" width="1" height="1" fill="#000"/><rect x="710" y="662" width="1" height="1" fill="#000"/><rect x="706" y="657" width="1" height="1" fill="#000"/><rect x="711" y="663" width="1" height="1" fill="#000"/><rect x="712" y="651" width="1" height="1" fill="#000"/><rect x="711" y="652" width="1" height="1" fill="#000"/><rect x="710" y="653" width="1" height="1" fill="#000"/><rect x="709" y="654" width="1" height="1" fill="#000"/><rect x="708" y="655" width="1" height="1" fill="#000"/><rect x="707" y="656" width="1" height="1" fill="#000"/><rect x="706" y="657" width="1" height="1" fill="#000"/><rect x="706" y="658" width="1" height="1" fill="#000"/><rect x="705" y="659" width="1" height="1" fill="#000"/><rect x="704" y="660" width="1" height="1" fill="#000"/><rect x="703" y="661" width="1" height="1" fill="#000"/><rect x="702" y="662" width="1" height="1" fill="#000"/><rect x="701" y="663" width="1" height="1" fill="#000"/><rect x="779" y="648" width="4" height="1" fill="#000"/><rect x="779" y="665" width="4" height="1" fill="#000"/><rect x="776" y="649" width="3" height="1" fill="#000"/><rect x="776" y="664" width="3" height="1" fill="#000"/><rect x="783" y="649" width="3" height="1" fill="#000"/><rect x="783" y="664" width="3" height="1" fill="#000"/><rect x="775" y="650" width="1" height="1" fill="#000"/><rect x="775" y="663" width="1" height="1" fill="#000"/><rect x="786" y="650" width="1" height="1" fill="#000"/><rect x="786" y="663" width="1" height="1" fill="#000"/><rect x="774" y="651" width="1" height="1" fill="#000"/><rect x="774" y="662" width="1" height="1" fill="#000"/><rect x="787" y="651" width="1" height="1" fill="#000"/><rect x="787" y="662" width="1" height="1" fill="#000"/><rect x="773" y="652" width="1" height="1" fill="#000"/><rect x="773" y="661" width="1" height="1" fill="#000"/><rect x="788" y="652" width="1" height="1" fill="#000"/><rect x="788" y="661" width="1" height="1" fill="#000"/><rect x="773" y="653" width="1" height="1" fill="#000"/><rect x="773" y="660" width="1" height="1" fill="#000"/><rect x="788" y="653" width="1" height="1" fill="#000"/><rect x="788" y="660" width="1" height="1" fill="#000"/><rect x="773" y="654" width="1" height="1" fill="#000"/><rect x="773" y="659" width="1" height="1" fill="#000"/><rect x="788" y="654" width="1" height="1" fill="#000"/><rect x="788" y="659" width="1" height="1" fill="#000"/><rect x="772" y="655" width="1" height="1" fill="#000"/><rect x="772" y="658" width="1" height="1" fill="#000"/><rect x="789" y="655" width="1" height="1" fill="#000"/><rect x="789" y="658" width="1" height="1" fill="#000"/><rect x="772" y="656" width="1" height="1" fill="#000"/><rect x="772" y="657" width="1" height="1" fill="#000"/><rect x="789" y="656" width="1" height="1" fill="#000"/><rect x="789" y="657" width="1" height="1" fill="#000"/><rect x="772" y="657" width="1" height="1" fill="#000"/><rect x="772" y="656" width="1" height="1" fill="#000"/><rect x="789" y="657" width="1" height="1" fill="#000"/><rect x="789" y="656" width="1" height="1" fill="#000"/><rect x="772" y="658" width="1" height="1" fill="#000"/><rect x="772" y="655" width="1" height="1" fill="#000"/><rect x="789" y="658" width="1" height="1" fill="#000"/><rect x="789" y="655" width="1" height="1" fill="#000"/><rect x="776" y="652" width="1" height="1" fill="#000"/><rect x="781" y="658" width="1" height="1" fill="#000"/><rect x="777" y="653" width="1" height="1" fill="#000"/><rect x="782" y="659" width="1" height="1" fill="#000"/><rect x="778" y="654" width="1" height="1" fill="#000"/><rect x="783" y="660" width="1" height="1" fill="#000"/><rect x="779" y="655" width="1" height="1" fill="#000"/><rect x="784" y="661" width="1" height="1" fill="#000"/><rect x="780" y="656" width="1" height="1" fill="#000"/><rect x="785" y="662" width="1" height="1" fill="#000"/><rect x="781" y="657" width="1" height="1" fill="#000"/><rect x="786" y="663" width="1" height="1" fill="#000"/><rect x="787" y="651" width="1" height="1" fill="#000"/><rect x="786" y="652" width="1" height="1" fill="#000"/><rect x="785" y="653" width="1" height="1" fill="#000"/><rect x="784" y="654" width="1" height="1" fill="#000"/><rect x="783" y="655" width="1" height="1" fill="#000"/><rect x="782" y="656" width="1" height="1" fill="#000"/><rect x="781" y="657" width="1" height="1" fill="#000"/><rect x="781" y="658" width="1" height="1" fill="#000"/><rect x="780" y="659" width="1" height="1" fill="#000"/><rect x="779" y="660" width="1" height="1" fill="#000"/><rect x="778" y="661" width="1" height="1" fill="#000"/><rect x="777" y="662" width="1" height="1" fill="#000"/><rect x="776" y="663" width="1" height="1" fill="#000"/><rect x="852" y="648" width="8" height="1" fill="#000"/><rect x="852" y="665" width="8" height="1" fill="#000"/><rect x="849" y="649" width="3" height="1" fill="#000"/><rect x="849" y="664" width="3" height="1" fill="#000"/><rect x="860" y="649" width="3" height="1" fill="#000"/><rect x="860" y="664" width="3" height="1" fill="#000"/><rect x="846" y="650" width="3" height="1" fill="#000"/><rect x="846" y="663" width="3" height="1" fill="#000"/><rect x="863" y="650" width="3" height="1" fill="#000"/><rect x="863" y="663" width="3" height="1" fill="#000"/><rect x="845" y="651" width="1" height="1" fill="#000"/><rect x="845" y="662" width="1" height="1" fill="#000"/><rect x="866" y="651" width="1" height="1" fill="#000"/><rect x="866" y="662" width="1" height="1" fill="#000"/><rect x="844" y="652" width="1" height="1" fill="#000"/><rect x="844" y="661" width="1" height="1" fill="#000"/><rect x="867" y="652" width="1" height="1" fill="#000"/><rect x="867" y="661" width="1" height="1" fill="#000"/><rect x="843" y="653" width="1" height="1" fill="#000"/><rect x="843" y="660" width="1" height="1" fill="#000"/><rect x="868" y="653" width="1" height="1" fill="#000"/><rect x="868" y="660" width="1" height="1" fill="#000"/><rect x="843" y="654" width="1" height="1" fill="#000"/><rect x="843" y="659" width="1" height="1" fill="#000"/><rect x="868" y="654" width="1" height="1" fill="#000"/><rect x="868" y="659" width="1" height="1" fill="#000"/><rect x="842" y="655" width="1" height="1" fill="#000"/><rect x="842" y="658" width="1" height="1" fill="#000"/><rect x="869" y="655" width="1" height="1" fill="#000"/><rect x="869" y="658" width="1" height="1" fill="#000"/><rect x="842" y="656" width="1" height="1" fill="#000"/><rect x="842" y="657" width="1" height="1" fill="#000"/><rect x="869" y="656" width="1" height="1" fill="#000"/><rect x="869" y="657" width="1" height="1" fill="#000"/><rect x="849" y="655" width="2" height="1" fill="#000"/><rect x="849" y="658" width="2" height="1" fill="#000"/><rect x="848" y="656" width="1" height="2" fill="#000"/><rect x="851" y="656" width="1" height="2" fill="#000"/><rect x="860" y="655" width="2" height="1" fill="#000"/><rect x="860" y="658" width="2" height="1" fill="#000"/><rect x="859" y="656" width="1" height="2" fill="#000"/><rect x="862" y="656" width="1" height="2" fill="#000"/><rect x="1158" y="353" width="1" height="1" fill="#e8b890"/><rect x="1159" y="353" width="1" height="1" fill="#8fc0ea"/><rect x="1158" y="354" width="2" height="1" fill="#b8cfe6"/><rect x="735" y="521" width="1" height="1" fill="#e8b890"/><rect x="736" y="521" width="1" height="1" fill="#8fc0ea"/><rect x="735" y="522" width="2" height="1" fill="#b8cfe6"/><rect x="929" y="521" width="1" height="1" fill="#e8b890"/><rect x="930" y="521" width="1" height="1" fill="#8fc0ea"/><rect x="929" y="522" width="2" height="1" fill="#b8cfe6"/><rect x="1003" y="521" width="1" height="1" fill="#e8b890"/><rect x="1004" y="521" width="1" height="1" fill="#8fc0ea"/><rect x="1003" y="522" width="2" height="1" fill="#b8cfe6"/><rect x="622" y="585" width="1" height="1" fill="#e8b890"/><rect x="623" y="585" width="1" height="1" fill="#8fc0ea"/><rect x="622" y="586" width="2" height="1" fill="#b8cfe6"/><rect x="698" y="585" width="1" height="1" fill="#e8b890"/><rect x="699" y="585" width="1" height="1" fill="#8fc0ea"/><rect x="698" y="586" width="2" height="1" fill="#b8cfe6"/><rect x="773" y="585" width="1" height="1" fill="#e8b890"/><rect x="774" y="585" width="1" height="1" fill="#8fc0ea"/><rect x="773" y="586" width="2" height="1" fill="#b8cfe6"/><rect x="848" y="585" width="1" height="1" fill="#e8b890"/><rect x="849" y="585" width="1" height="1" fill="#8fc0ea"/><rect x="848" y="586" width="2" height="1" fill="#b8cfe6"/><rect x="1769" y="537" width="1" height="1" fill="#e8b890"/><rect x="1770" y="537" width="1" height="1" fill="#8fc0ea"/><rect x="1769" y="538" width="2" height="1" fill="#b8cfe6"/><rect x="1367" y="710" width="1" height="1" fill="#e8b890"/><rect x="1368" y="710" width="1" height="1" fill="#8fc0ea"/><rect x="1367" y="711" width="2" height="1" fill="#b8cfe6"/><rect x="1424" y="710" width="1" height="1" fill="#e8b890"/><rect x="1425" y="710" width="1" height="1" fill="#8fc0ea"/><rect x="1424" y="711" width="2" height="1" fill="#b8cfe6"/><rect x="1538" y="851" width="1" height="1" fill="#e8b890"/><rect x="1539" y="851" width="1" height="1" fill="#8fc0ea"/><rect x="1538" y="852" width="2" height="1" fill="#b8cfe6"/><rect x="1613" y="851" width="1" height="1" fill="#e8b890"/><rect x="1614" y="851" width="1" height="1" fill="#8fc0ea"/><rect x="1613" y="852" width="2" height="1" fill="#b8cfe6"/><rect x="1689" y="851" width="1" height="1" fill="#e8b890"/><rect x="1690" y="851" width="1" height="1" fill="#8fc0ea"/><rect x="1689" y="852" width="2" height="1" fill="#b8cfe6"/><rect x="1347" y="344" width="3" height="1" fill="#d8d0c0"/><rect x="1351" y="359" width="3" height="1" fill="#c8d8e0"/><rect x="1166" y="449" width="1" height="1" fill="#fff"/><rect x="1241" y="449" width="1" height="1" fill="#fff"/><rect x="1637" y="279" width="1" height="1" fill="#fff"/><rect x="630" y="640" width="1" height="1" fill="#fff"/><rect x="706" y="640" width="1" height="1" fill="#fff"/><rect x="781" y="640" width="1" height="1" fill="#fff"/><rect x="856" y="640" width="1" height="1" fill="#fff"/></svg>

</body></html>
